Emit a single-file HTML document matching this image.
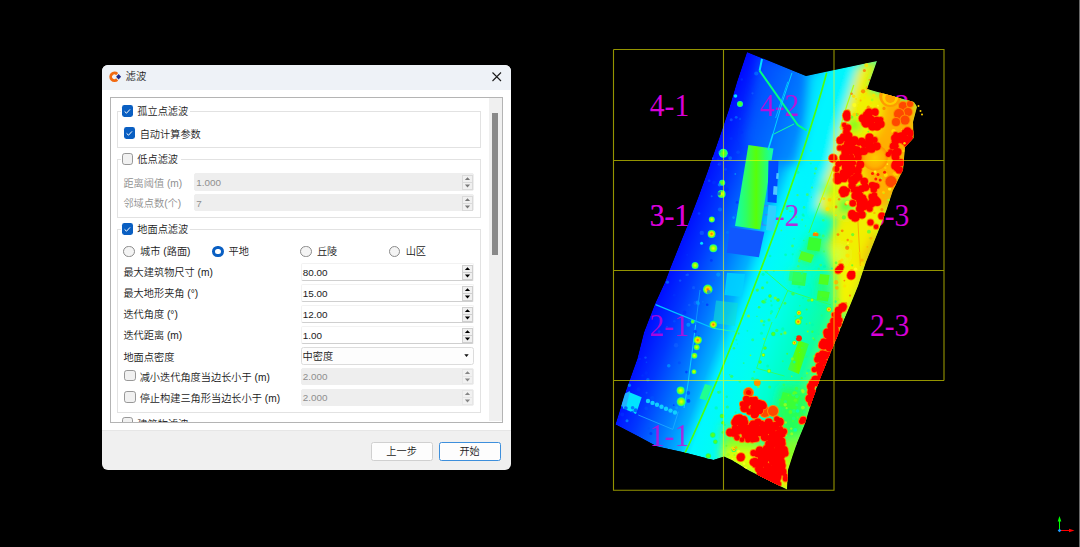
<!DOCTYPE html>
<html lang="zh-CN">
<head>
<meta charset="utf-8">
<title>滤波</title>
<style>
html,body{margin:0;padding:0;background:#000;}
body{width:1080px;height:547px;position:relative;overflow:hidden;
  font-family:"Liberation Sans","Noto Sans CJK SC",sans-serif;font-size:10.2px;color:#1a1a1a;font-weight:350;}
.abs{position:absolute;}
#scene{position:absolute;left:0;top:0;width:1080px;height:547px;}
/* dialog */
#dlg{position:absolute;left:102px;top:65px;width:409px;height:405px;background:#f0f0f0;border-radius:6px;overflow:hidden;}
#title{position:absolute;left:0;top:0;width:409px;height:24.8px;background:#eef2f7;}
#title .t{position:absolute;left:23.5px;top:5px;font-size:10.4px;line-height:14px;color:#1c1c1c;}
#body{position:absolute;left:0;top:24.8px;width:409px;height:340.6px;background:#fff;border-bottom:1px solid #e6e6e6;}
#scroll{position:absolute;left:8px;top:32px;width:392.5px;height:326px;border:1px solid #b4b4b4;box-sizing:border-box;background:#fff;overflow:hidden;}
#track{position:absolute;left:378px;top:0;width:13px;height:323px;background:#f0f0f0;}
#thumb{position:absolute;left:382px;top:15px;width:6px;height:142px;background:#8a8a8a;}
.gb{position:absolute;border:1px solid #e2e2e2;box-sizing:border-box;}
.cb{position:absolute;width:11.5px;height:11.5px;box-sizing:border-box;border-radius:2.4px;margin:-0.9px 0 0 -0.2px;}
.cb.on{background:#0a5fc2;}
.cb.off{background:#f1f1f1;border:1px solid #989898;border-radius:2.8px;}
.cb svg{position:absolute;left:0.5px;top:0.5px;width:10.5px;height:10.5px;}
.lb{position:absolute;white-space:nowrap;line-height:14px;height:14px;margin-top:1px;}
.lb.bgw{background:#fff;}
.dis{color:#8f8f8f;}
.sp{position:absolute;height:17.5px;box-sizing:border-box;background:#fff;border:1px solid #f2f2f2;border-bottom:1.5px solid #cfcfcf;border-radius:2px;}
.sp.d{background:#eeeeee;border:1px solid #eeeeee;height:17.3px;}
.sp .v{position:absolute;left:1.2px;top:1.5px;line-height:14px;font-size:9.9px;}
.sp.cmb .v{font-size:10.2px;left:1px;}
.sp .ar{position:absolute;right:0px;top:0.5px;width:11px;height:15px;}
.rd{position:absolute;width:11.8px;height:11.8px;border-radius:50%;box-sizing:border-box;margin:-0.4px 0 0 -0.5px;}
.rd.off{border:1px solid #8a8a8a;background:#f4f4f4;}
.rd.on{border:3.6px solid #0a5fc2;background:#fff;}
.sp.cmb{border:1px solid #dcdcdc;background:#fdfdfd;border-radius:2.5px;}
.btn{position:absolute;top:376.5px;height:19.5px;width:62px;box-sizing:border-box;border:1px solid #d0d0d0;border-radius:2.5px;background:#fdfdfd;text-align:center;line-height:17px;}
.btn.def{border:1px solid #3d8fdc;}
</style>
</head>
<body>
<svg id="scene" viewBox="0 0 1080 547">
<!--CLB-->
<defs>
<clipPath id="cp"><polygon points="747,52 806,76 877,61 867,89 914,102 917,107 913,122 913.5,138 905,147 903,170 893,190 886.5,210 878,232 866,262 858,286 849,308 835,342 821,376 812,401 804.5,425 797,443 792.5,456 788,470 787,489.5 780,486 767,479.5 749,470.5 732,460 724,456.5 713.5,460 707.5,458.4 683.4,452.3 657,446.6 637.5,436 615.4,424.6 626.3,389.5 637.3,358.8 643.9,332.4 654.9,303.9 665,282 670.2,268.3 679,246.3 687.8,224.4 698.8,195.8 707.5,171.7 713.3,155 719.4,137.5 728.6,110.2 737,81.7"/></clipPath>
<linearGradient id="jet" gradientUnits="userSpaceOnUse" x1="653.7" y1="301.4" x2="833.6" y2="368.6">
<stop offset="0.000" stop-color="#0008ff"/>
<stop offset="0.141" stop-color="#0038ff"/>
<stop offset="0.281" stop-color="#0078ff"/>
<stop offset="0.385" stop-color="#00b0ff"/>
<stop offset="0.432" stop-color="#00e4ff"/>
<stop offset="0.458" stop-color="#00f8ff"/>
<stop offset="0.609" stop-color="#00ffee"/>
<stop offset="0.750" stop-color="#00ffc8"/>
<stop offset="0.854" stop-color="#10ffa0"/>
<stop offset="0.938" stop-color="#60ff60"/>
<stop offset="1.000" stop-color="#c0ff20"/>
</linearGradient>
<filter id="b8" x="-40%" y="-40%" width="180%" height="180%"><feGaussianBlur stdDeviation="8"/></filter>
<filter id="b5" x="-40%" y="-40%" width="180%" height="180%"><feGaussianBlur stdDeviation="5"/></filter>
<filter id="b3" x="-40%" y="-40%" width="180%" height="180%"><feGaussianBlur stdDeviation="3"/></filter>
<filter id="b1" x="-40%" y="-40%" width="180%" height="180%"><feGaussianBlur stdDeviation="1"/></filter>
<linearGradient id="bld" x1="0" y1="0" x2="1" y2="0"><stop offset="0" stop-color="#10ffb0"/><stop offset="0.3" stop-color="#30ff60"/><stop offset="0.55" stop-color="#58ff08"/><stop offset="0.8" stop-color="#28ff70"/><stop offset="1" stop-color="#10ffb0"/></linearGradient>
<linearGradient id="bld2" x1="0" y1="0" x2="1" y2="0"><stop offset="0" stop-color="#30ff60"/><stop offset="0.5" stop-color="#60ff00"/><stop offset="1" stop-color="#30ff50"/></linearGradient>
<radialGradient id="tg"><stop offset="0" stop-color="#ff6000"/><stop offset="0.45" stop-color="#ffe000"/><stop offset="0.8" stop-color="#60ff20"/><stop offset="1" stop-color="#00ffa0"/></radialGradient>
<radialGradient id="ty"><stop offset="0" stop-color="#f0ff00"/><stop offset="0.6" stop-color="#80ff10"/><stop offset="1" stop-color="#00ffa0"/></radialGradient>
<radialGradient id="tgr"><stop offset="0" stop-color="#70ff00"/><stop offset="0.7" stop-color="#30ff50"/><stop offset="1" stop-color="#00ffc0"/></radialGradient>
<radialGradient id="dome"><stop offset="0" stop-color="#ffc800"/><stop offset="0.7" stop-color="#ffb000"/><stop offset="1" stop-color="#ff9000"/></radialGradient>
</defs>
<text x="649.8" y="116" font-family="Liberation Serif, serif" font-size="30.5" textLength="39.4" lengthAdjust="spacingAndGlyphs" fill="#d800d8">4-1</text>
<text x="760.0" y="116" font-family="Liberation Serif, serif" font-size="30.5" textLength="39.4" lengthAdjust="spacingAndGlyphs" fill="#d800d8">4-2</text>
<text x="870.0" y="116" font-family="Liberation Serif, serif" font-size="30.5" textLength="39.4" lengthAdjust="spacingAndGlyphs" fill="#d800d8">4-3</text>
<text x="649.8" y="226" font-family="Liberation Serif, serif" font-size="30.5" textLength="39.4" lengthAdjust="spacingAndGlyphs" fill="#d800d8">3-1</text>
<text x="760.0" y="226" font-family="Liberation Serif, serif" font-size="30.5" textLength="39.4" lengthAdjust="spacingAndGlyphs" fill="#d800d8">3-2</text>
<text x="870.0" y="226" font-family="Liberation Serif, serif" font-size="30.5" textLength="39.4" lengthAdjust="spacingAndGlyphs" fill="#d800d8">3-3</text>
<text x="649.8" y="336" font-family="Liberation Serif, serif" font-size="30.5" textLength="39.4" lengthAdjust="spacingAndGlyphs" fill="#d800d8">2-1</text>
<text x="760.0" y="336" font-family="Liberation Serif, serif" font-size="30.5" textLength="39.4" lengthAdjust="spacingAndGlyphs" fill="#d800d8" clip-path="url(#cp)">2-2</text>
<text x="870.0" y="336" font-family="Liberation Serif, serif" font-size="30.5" textLength="39.4" lengthAdjust="spacingAndGlyphs" fill="#d800d8">2-3</text>
<text x="649.8" y="446" font-family="Liberation Serif, serif" font-size="30.5" textLength="39.4" lengthAdjust="spacingAndGlyphs" fill="#d800d8">1-1</text>
<text x="760.0" y="446" font-family="Liberation Serif, serif" font-size="30.5" textLength="39.4" lengthAdjust="spacingAndGlyphs" fill="#d800d8" clip-path="url(#cp)">1-2</text>
<g clip-path="url(#cp)">
<polygon points="747,52 806,76 877,61 867,89 914,102 917,107 913,122 913.5,138 905,147 903,170 893,190 886.5,210 878,232 866,262 858,286 849,308 835,342 821,376 812,401 804.5,425 797,443 792.5,456 788,470 787,489.5 780,486 767,479.5 749,470.5 732,460 724,456.5 713.5,460 707.5,458.4 683.4,452.3 657,446.6 637.5,436 615.4,424.6 626.3,389.5 637.3,358.8 643.9,332.4 654.9,303.9 665,282 670.2,268.3 679,246.3 687.8,224.4 698.8,195.8 707.5,171.7 713.3,155 719.4,137.5 728.6,110.2 737,81.7" fill="url(#jet)"/>
<g filter="url(#b5)">
<polygon points="760.0,55.0 806.0,76.0 826.0,72.0 800.0,165.0 770.0,165.0 745.0,140.0" fill="#0068ff" opacity="0.55"/>
<polygon points="810.0,74.0 860.0,64.0 838.0,134.0 832.0,162.0 822.0,188.0 817.0,210.0 790.0,215.0 806.0,130.0" fill="#00f4ff" opacity="0.85"/>
<polygon points="858.0,66.0 880.0,58.0 870.0,90.0 920.0,102.0 918.0,140.0 906.0,170.0 896.0,195.0 888.0,212.0 880.0,235.0 868.0,264.0 860.0,288.0 851.0,310.0 838.0,312.0 836.0,300.0 835.0,278.0 827.0,247.0 837.0,218.0 817.0,210.0 822.0,188.0 832.0,162.0 838.0,134.0 848.0,100.0" fill="#f0f000"/>
<polygon points="884.0,96.0 918.0,103.0 915.0,140.0 905.0,172.0 897.0,195.0 886.0,212.0 872.0,200.0 863.0,170.0 864.0,146.0 880.0,130.0" fill="#ffae00"/>
<polygon points="880.0,232.0 868.0,264.0 860.0,288.0 851.0,310.0 844.0,308.0 854.0,284.0 863.0,258.0 872.0,236.0" fill="#ffa800"/>
<polygon points="838.0,268.0 866.0,262.0 851.0,310.0 838.0,312.0" fill="#f4f400"/>
<circle cx="854.0" cy="125.0" r="7.0" fill="#40ff20"/>
<circle cx="846.0" cy="206.0" r="9.0" fill="#40ff40"/>
<circle cx="828.0" cy="189.0" r="7.0" fill="#90ff20"/>
<circle cx="846.0" cy="203.0" r="6.0" fill="#30ff40"/>
<circle cx="815.0" cy="245.0" r="8.0" fill="#30ff40"/>
<circle cx="806.0" cy="258.0" r="7.0" fill="#30ff60"/>
<circle cx="797.0" cy="277.0" r="7.0" fill="#30ff70"/>
<circle cx="823.0" cy="282.0" r="5.0" fill="#40ff40"/>
<circle cx="824.0" cy="294.0" r="5.0" fill="#40ff40"/>
<circle cx="837.0" cy="254.7" r="9.0" fill="#d8ff30"/>
<polygon points="782.0,386.0 812.0,392.0 804.0,430.0 796.0,452.0 780.0,440.0 776.0,410.0" fill="#28ff58"/>
<polygon points="788.0,440.0 800.0,436.0 790.0,468.0 780.0,462.0" fill="#90ff10"/>
<polygon points="722.0,440.0 745.0,436.0 770.0,450.0 790.0,462.0 787.0,492.0 760.0,480.0 722.0,462.0" fill="#e0ff00"/>
<polygon points="722.0,425.0 760.0,430.0 760.0,450.0 722.0,450.0" fill="#70ff30" opacity="0.7"/>
</g>
<clipPath id="c32"><rect x="773" y="190" width="40" height="50"/></clipPath>
<text x="760.0" y="116" font-family="Liberation Serif, serif" font-size="30.5" textLength="39.4" lengthAdjust="spacingAndGlyphs" fill="#d800d8" opacity="0.85">4-2</text>
<text x="760.0" y="226" font-family="Liberation Serif, serif" font-size="30.5" textLength="39.4" lengthAdjust="spacingAndGlyphs" fill="#d800d8" opacity="0.25">3-2</text>
<text x="760.0" y="226" font-family="Liberation Serif, serif" font-size="30.5" textLength="39.4" lengthAdjust="spacingAndGlyphs" fill="#d800d8" clip-path="url(#c32)" opacity="0.75">3-2</text>
<text x="649.8" y="336" font-family="Liberation Serif, serif" font-size="30.5" textLength="39.4" lengthAdjust="spacingAndGlyphs" fill="#d800d8" opacity="0.75">2-1</text>
<text x="649.8" y="446" font-family="Liberation Serif, serif" font-size="30.5" textLength="39.4" lengthAdjust="spacingAndGlyphs" fill="#d800d8" opacity="0.75">1-1</text>
<g>
<polygon points="748.4,145 773.5,148.5 760.2,229.6 735,226" fill="url(#bld)"/>
</g>
<polygon points="730.0,227.2 764.4,231.7 758.9,257.2 726.7,252.8" fill="#1058ff"/>
<polygon points="768.5,160.0 778.5,161.0 776.5,203.0 767.5,202.0" fill="#0048ff"/>
<polygon points="773.6,186.0 777.6,186.5 777.0,195.0 773.0,194.5" fill="#50c8ff"/>
<polygon points="776.5,173.0 778.8,173.3 778.4,179.0 776.1,178.7" fill="#50c8ff"/>
<polygon points="768.5,205.0 776.5,206.0 774.0,231.0 766.0,230.0" fill="#30d0ff"/>
<polygon points="727.0,272.8 745.0,274.0 742.0,297.0 724.5,295.0" fill="#00d4ff" opacity="0.85"/>
<polygon points="716.0,300.6 738.0,303.0 735.0,326.0 713.0,323.0" fill="#10e0d0" opacity="0.55"/>
<polygon points="628.3,391.7 641.7,397.2 636.0,413.9 622.8,408.3" fill="#00e4ff"/>
<polygon points="624.0,394.0 630.0,391.0 626.0,408.0 621.0,406.0" fill="#20b0ff"/>
<circle cx="648.0" cy="401.0" r="2.2" fill="#10d0ff"/>
<circle cx="652.5" cy="402.9" r="2.2" fill="#10d0ff"/>
<circle cx="657.0" cy="404.8" r="2.2" fill="#10d0ff"/>
<circle cx="661.5" cy="406.8" r="2.2" fill="#10d0ff"/>
<circle cx="666.0" cy="408.7" r="2.2" fill="#10d0ff"/>
<circle cx="670.5" cy="410.6" r="2.2" fill="#10d0ff"/>
<circle cx="675.0" cy="412.5" r="2.2" fill="#10d0ff"/>
<path d="M638.3 415.0 L672.8 429.4 L678.3 411.7" stroke="#20b0ff" stroke-width="0.8" fill="none"/>
<polygon points="705.0,384.0 712.0,386.0 706.5,400.5 699.5,398.5" fill="#20ff90"/>
<path d="M762.0 59.0 L759.6 70.6" stroke="#00e0ff" stroke-width="2" fill="none"/>
<path d="M759.6 70.6 L797.8 125.0 L806.7 130.5" stroke="#00ff80" stroke-width="2" fill="none"/>
<path d="M792.0 72.8 L783.0 100.0 L773.0 134.0" stroke="#00e0ff" stroke-width="0.9" fill="none"/>
<path d="M787.8 81.7 L775.6 118.0" stroke="#00d0ff" stroke-width="0.8" fill="none"/>
<path d="M774.0 134.0 L794.0 124.0" stroke="#10ffa0" stroke-width="1" fill="none"/>
<path d="M773.0 134.0 L768.0 150.0" stroke="#00e0ff" stroke-width="1.6" fill="none"/>
<path d="M826.7 72.8 Q806 150 761 269 T685 453" stroke="#48ff10" stroke-width="1.7" fill="none"/>
<path d="M853.8 85.0 L846.7 106.0 L840.0 128.0" stroke="#b0ff10" stroke-width="1.2" fill="none"/>
<path d="M833.3 168.3 L820.0 202.8" stroke="#c8ff00" stroke-width="1.1" fill="none"/>
<path d="M820.0 202.8 L808.9 232.8" stroke="#40ff40" stroke-width="0.9" fill="none"/>
<path d="M655.6 304.6 L713.3 328.3" stroke="#00c8ff" stroke-width="1.2" fill="none"/>
<path d="M713.3 328.3 L735.6 331.7" stroke="#20f0c0" stroke-width="1.0" fill="none"/>
<path d="M695.6 325.0 L687.8 385.0 L684.0 408.0" stroke="#10d8ff" stroke-width="0.9" fill="none"/>
<path d="M700.0 290.0 L695.6 325.0" stroke="#10a0ff" stroke-width="0.8" fill="none"/>
<path d="M764.4 270.6 L787.8 290.6 L831.0 305.0" stroke="#30ff60" stroke-width="1" fill="none"/>
<path d="M787.8 290.6 L775.6 318.3" stroke="#30ff60" stroke-width="1" fill="none"/>
<path d="M764.4 342.8 L756.7 368.3 L784.4 376.0" stroke="#30ff60" stroke-width="0.9" fill="none"/>
<path d="M764.4 342.8 L772.0 322.0" stroke="#30ff60" stroke-width="0.9" fill="none"/>
<path d="M857.8 219.4 L860.4 266.0" stroke="#ff9000" stroke-width="0.7" fill="none"/>
<polygon points="793.3,271.7 806.7,273.0 805.0,286.0 791.6,284.6" fill="#30ff50"/>
<polygon points="820.0,274.0 829.5,275.0 828.0,285.0 818.5,284.0" fill="#50ff20"/>
<polygon points="818.0,290.6 829.5,292.0 828.0,301.5 816.5,300.0" fill="#40ff30"/>
<polygon points="798.9,340.6 808.9,343.9 798.9,373.9 787.8,369.4" fill="url(#bld2)"/>
<polygon points="782.8,392.0 800.0,396.0 796.0,410.0 779.0,406.0" fill="#40ff30" opacity="0.8"/>
<polygon points="809.0,237.0 821.5,239.0 819.5,251.5 807.0,249.5" fill="#38ff30"/>
<polygon points="801.5,251.0 814.0,255.0 811.0,263.0 798.5,259.0" fill="#50ff28"/>
<polygon points="790.0,271.0 804.0,273.0 802.5,282.5 788.5,280.5" fill="#30ff60" opacity="0.7"/>
<polygon points="820.7,291.0 829.5,292.5 828.5,298.0 819.7,296.5" fill="#48ff28"/>
<circle cx="740.0" cy="103.9" r="3.0" fill="url(#tgr)"/>
<circle cx="723.3" cy="153.2" r="4.5" fill="url(#tgr)"/>
<circle cx="722.2" cy="182.8" r="3.0" fill="url(#tgr)"/>
<circle cx="721.6" cy="193.9" r="4.0" fill="url(#ty)"/>
<circle cx="711.8" cy="219.4" r="3.0" fill="url(#ty)"/>
<circle cx="711.6" cy="233.9" r="4.0" fill="url(#tg)"/>
<circle cx="713.3" cy="248.3" r="4.0" fill="url(#ty)"/>
<circle cx="695.1" cy="265.4" r="3.5" fill="url(#ty)"/>
<circle cx="707.8" cy="289.4" r="4.8" fill="url(#tg)"/>
<circle cx="713.3" cy="324.6" r="3.8" fill="url(#tg)"/>
<circle cx="697.8" cy="340.1" r="4.2" fill="url(#tg)"/>
<circle cx="696.7" cy="347.2" r="3.0" fill="url(#ty)"/>
<circle cx="694.4" cy="355.7" r="3.0" fill="url(#ty)"/>
<circle cx="694.0" cy="371.7" r="2.5" fill="url(#ty)"/>
<circle cx="692.7" cy="321.7" r="2.0" fill="url(#tgr)"/>
<circle cx="680.6" cy="390.6" r="4.0" fill="url(#ty)"/>
<circle cx="681.2" cy="401.7" r="4.5" fill="url(#ty)"/>
<circle cx="798.9" cy="312.8" r="2.7" fill="url(#tg)"/>
<circle cx="798.2" cy="321.7" r="3.6" fill="url(#tg)"/>
<circle cx="828.9" cy="309.4" r="3.0" fill="url(#tg)"/>
<circle cx="794.4" cy="342.8" r="2.5" fill="url(#tg)"/>
<circle cx="756.7" cy="381.7" r="3.2" fill="url(#tg)"/>
<circle cx="763.3" cy="355.0" r="2.0" fill="url(#ty)"/>
<circle cx="773.3" cy="333.9" r="2.5" fill="url(#tgr)"/>
<circle cx="712.8" cy="435.0" r="3.0" fill="url(#tgr)"/>
<circle cx="715.4" cy="441.7" r="2.5" fill="url(#tgr)"/>
<circle cx="708.3" cy="456.0" r="3.0" fill="url(#tgr)"/>
<circle cx="722.0" cy="416.0" r="2.5" fill="url(#tgr)"/>
<circle cx="722.8" cy="422.8" r="2.0" fill="url(#tgr)"/>
<circle cx="815.6" cy="233.9" r="2.5" fill="url(#tg)"/>
<circle cx="749.4" cy="392.8" r="4.0" fill="url(#tg)"/>
<circle cx="757.2" cy="382.8" r="3.5" fill="url(#tg)"/>
<circle cx="771.7" cy="411.7" r="5.0" fill="url(#tg)"/>
<circle cx="778.3" cy="420.6" r="5.0" fill="url(#tg)"/>
<circle cx="733.9" cy="449.4" r="2.5" fill="url(#tg)"/>
<circle cx="765.0" cy="348.0" r="2.0" fill="url(#tgr)"/>
<circle cx="760.0" cy="362.0" r="2.0" fill="url(#tgr)"/>
<circle cx="769.0" cy="371.0" r="2.2" fill="url(#ty)"/>
<circle cx="778.0" cy="300.0" r="2.0" fill="url(#tgr)"/>
<circle cx="770.0" cy="296.0" r="2.0" fill="url(#tgr)"/>
<circle cx="801.0" cy="318.0" r="2.0" fill="url(#tgr)"/>
<circle cx="812.0" cy="300.0" r="2.0" fill="url(#ty)"/>
<circle cx="735.5" cy="96.0" r="1.8" fill="#00e0ff"/>
<circle cx="701.6" cy="243.2" r="1.5" fill="#00e0ff"/>
<circle cx="798.9" cy="338.3" r="3.0" fill="#ff2000"/>
<circle cx="853.7" cy="96.3" r="1.7" fill="#ffe000" opacity="0.85"/>
<circle cx="863.0" cy="119.1" r="1.6" fill="#ffe000" opacity="0.85"/>
<circle cx="843.9" cy="217.4" r="2.1" fill="#60ff30" opacity="0.85"/>
<circle cx="843.7" cy="199.4" r="1.0" fill="#a0ff20" opacity="0.85"/>
<circle cx="852.2" cy="265.3" r="1.1" fill="#60ff30" opacity="0.85"/>
<circle cx="878.0" cy="105.7" r="0.9" fill="#ffff20" opacity="0.85"/>
<circle cx="842.2" cy="230.8" r="1.4" fill="#ff8000" opacity="0.85"/>
<circle cx="857.4" cy="121.1" r="1.1" fill="#ffd000" opacity="0.85"/>
<circle cx="845.9" cy="203.9" r="1.5" fill="#ff8000" opacity="0.85"/>
<circle cx="893.5" cy="131.1" r="2.2" fill="#ffe000" opacity="0.85"/>
<circle cx="872.2" cy="99.9" r="1.3" fill="#a0ff20" opacity="0.85"/>
<circle cx="829.6" cy="199.8" r="1.9" fill="#ffd000" opacity="0.85"/>
<circle cx="852.7" cy="234.6" r="1.6" fill="#60ff30" opacity="0.85"/>
<circle cx="893.7" cy="136.6" r="1.6" fill="#ffff20" opacity="0.85"/>
<circle cx="902.5" cy="130.3" r="1.3" fill="#ffff20" opacity="0.85"/>
<circle cx="856.0" cy="296.9" r="1.3" fill="#60ff30" opacity="0.85"/>
<circle cx="846.3" cy="157.3" r="2.0" fill="#ffe000" opacity="0.85"/>
<circle cx="838.3" cy="160.0" r="1.2" fill="#ffb000" opacity="0.85"/>
<circle cx="849.3" cy="163.5" r="1.3" fill="#a0ff20" opacity="0.85"/>
<circle cx="844.9" cy="181.2" r="1.6" fill="#ff8000" opacity="0.85"/>
<circle cx="874.4" cy="212.9" r="1.2" fill="#ffb000" opacity="0.85"/>
<circle cx="889.7" cy="188.9" r="1.7" fill="#ffff20" opacity="0.85"/>
<circle cx="894.5" cy="174.0" r="2.0" fill="#ffd000" opacity="0.85"/>
<circle cx="888.7" cy="200.1" r="1.4" fill="#a0ff20" opacity="0.85"/>
<circle cx="882.2" cy="95.7" r="1.2" fill="#ff8000" opacity="0.85"/>
<circle cx="881.0" cy="178.4" r="1.0" fill="#a0ff20" opacity="0.85"/>
<circle cx="869.4" cy="79.8" r="0.9" fill="#ff8000" opacity="0.85"/>
<circle cx="894.6" cy="179.6" r="1.8" fill="#60ff30" opacity="0.85"/>
<circle cx="873.8" cy="95.2" r="1.6" fill="#ffe000" opacity="0.85"/>
<circle cx="896.3" cy="133.7" r="1.7" fill="#ffe000" opacity="0.85"/>
<circle cx="890.2" cy="124.3" r="1.3" fill="#ffb000" opacity="0.85"/>
<circle cx="856.9" cy="114.6" r="1.6" fill="#60ff30" opacity="0.85"/>
<circle cx="854.3" cy="114.7" r="1.9" fill="#ffd000" opacity="0.85"/>
<circle cx="844.2" cy="189.5" r="1.3" fill="#ffe000" opacity="0.85"/>
<circle cx="868.3" cy="107.2" r="1.6" fill="#ff8000" opacity="0.85"/>
<circle cx="857.7" cy="114.0" r="1.1" fill="#ffb000" opacity="0.85"/>
<circle cx="855.1" cy="180.6" r="2.2" fill="#60ff30" opacity="0.85"/>
<circle cx="895.5" cy="179.4" r="1.0" fill="#ffd000" opacity="0.85"/>
<circle cx="867.4" cy="246.8" r="0.9" fill="#ffb000" opacity="0.85"/>
<circle cx="836.8" cy="287.8" r="1.9" fill="#ffb000" opacity="0.85"/>
<circle cx="881.9" cy="209.4" r="1.5" fill="#ff8000" opacity="0.85"/>
<circle cx="837.3" cy="197.3" r="0.8" fill="#ffd000" opacity="0.85"/>
<circle cx="903.0" cy="111.6" r="1.2" fill="#ff8000" opacity="0.85"/>
<circle cx="871.1" cy="252.0" r="1.3" fill="#60ff30" opacity="0.85"/>
<circle cx="863.1" cy="91.3" r="2.1" fill="#ff8000" opacity="0.85"/>
<circle cx="835.9" cy="215.3" r="1.0" fill="#ffe000" opacity="0.85"/>
<circle cx="853.9" cy="189.7" r="1.6" fill="#ffd000" opacity="0.85"/>
<circle cx="866.3" cy="65.1" r="2.1" fill="#ffe000" opacity="0.85"/>
<circle cx="865.4" cy="213.6" r="1.5" fill="#60ff30" opacity="0.85"/>
<circle cx="841.5" cy="128.4" r="1.5" fill="#ffd000" opacity="0.85"/>
<circle cx="914.3" cy="123.9" r="1.6" fill="#ffb000" opacity="0.85"/>
<circle cx="833.9" cy="170.3" r="0.9" fill="#ffb000" opacity="0.85"/>
<circle cx="864.0" cy="112.0" r="1.2" fill="#ffe000" opacity="0.85"/>
<circle cx="836.0" cy="282.2" r="2.2" fill="#ffb000" opacity="0.85"/>
<circle cx="908.7" cy="99.3" r="1.7" fill="#ffb000" opacity="0.85"/>
<circle cx="837.8" cy="167.6" r="1.5" fill="#ff8000" opacity="0.85"/>
<circle cx="863.3" cy="148.6" r="0.9" fill="#ff8000" opacity="0.85"/>
<circle cx="823.9" cy="198.7" r="1.4" fill="#ffe000" opacity="0.85"/>
<circle cx="859.7" cy="189.4" r="1.2" fill="#ffe000" opacity="0.85"/>
<circle cx="844.4" cy="280.6" r="0.9" fill="#ff8000" opacity="0.85"/>
<circle cx="902.3" cy="123.7" r="1.0" fill="#60ff30" opacity="0.85"/>
<circle cx="877.9" cy="235.9" r="0.9" fill="#ffe000" opacity="0.85"/>
<circle cx="900.4" cy="104.6" r="2.1" fill="#ff8000" opacity="0.85"/>
<circle cx="855.2" cy="198.5" r="2.1" fill="#ff8000" opacity="0.85"/>
<circle cx="917.0" cy="124.5" r="1.1" fill="#ff8000" opacity="0.85"/>
<circle cx="883.6" cy="192.9" r="1.1" fill="#a0ff20" opacity="0.85"/>
<circle cx="871.0" cy="103.2" r="1.3" fill="#ffe000" opacity="0.85"/>
<circle cx="846.1" cy="171.6" r="1.7" fill="#ffff20" opacity="0.85"/>
<circle cx="864.4" cy="183.7" r="2.0" fill="#a0ff20" opacity="0.85"/>
<circle cx="917.1" cy="136.2" r="1.1" fill="#ffb000" opacity="0.85"/>
<circle cx="855.6" cy="269.4" r="1.8" fill="#ffff20" opacity="0.85"/>
<circle cx="859.3" cy="186.5" r="2.2" fill="#60ff30" opacity="0.85"/>
<circle cx="845.7" cy="132.4" r="1.4" fill="#ffb000" opacity="0.85"/>
<circle cx="857.7" cy="141.5" r="2.2" fill="#ff8000" opacity="0.85"/>
<circle cx="846.0" cy="303.3" r="1.2" fill="#ff8000" opacity="0.85"/>
<circle cx="839.9" cy="143.2" r="0.9" fill="#ff8000" opacity="0.85"/>
<circle cx="871.3" cy="109.0" r="1.5" fill="#ffe000" opacity="0.85"/>
<circle cx="836.1" cy="207.0" r="1.4" fill="#ff8000" opacity="0.85"/>
<circle cx="851.8" cy="117.1" r="1.6" fill="#60ff30" opacity="0.85"/>
<circle cx="892.6" cy="183.5" r="1.2" fill="#60ff30" opacity="0.85"/>
<circle cx="873.3" cy="186.1" r="2.0" fill="#ffd000" opacity="0.85"/>
<circle cx="858.9" cy="172.7" r="0.9" fill="#ffe000" opacity="0.85"/>
<circle cx="871.3" cy="193.9" r="1.7" fill="#ffe000" opacity="0.85"/>
<circle cx="895.1" cy="178.4" r="1.9" fill="#ffd000" opacity="0.85"/>
<circle cx="848.0" cy="243.3" r="1.1" fill="#ffff20" opacity="0.85"/>
<circle cx="885.7" cy="174.9" r="2.0" fill="#ffe000" opacity="0.85"/>
<circle cx="868.9" cy="231.7" r="1.9" fill="#60ff30" opacity="0.85"/>
<circle cx="884.0" cy="108.4" r="1.6" fill="#ff8000" opacity="0.85"/>
<circle cx="846.9" cy="246.8" r="1.2" fill="#60ff30" opacity="0.85"/>
<circle cx="835.1" cy="180.5" r="1.5" fill="#ffff20" opacity="0.85"/>
<circle cx="870.0" cy="238.1" r="1.2" fill="#a0ff20" opacity="0.85"/>
<circle cx="867.7" cy="88.1" r="2.1" fill="#ffb000" opacity="0.85"/>
<circle cx="868.3" cy="131.6" r="0.9" fill="#60ff30" opacity="0.85"/>
<circle cx="848.3" cy="111.3" r="2.1" fill="#ffb000" opacity="0.85"/>
<circle cx="895.3" cy="124.5" r="1.3" fill="#60ff30" opacity="0.85"/>
<circle cx="844.7" cy="286.0" r="1.5" fill="#ffe000" opacity="0.85"/>
<circle cx="837.6" cy="299.3" r="1.8" fill="#a0ff20" opacity="0.85"/>
<circle cx="851.6" cy="93.7" r="1.3" fill="#ff8000" opacity="0.85"/>
<circle cx="853.8" cy="143.9" r="1.4" fill="#ffb000" opacity="0.85"/>
<circle cx="850.4" cy="152.5" r="1.4" fill="#ffd000" opacity="0.85"/>
<circle cx="879.7" cy="149.6" r="1.4" fill="#ff8000" opacity="0.85"/>
<circle cx="905.7" cy="129.3" r="0.9" fill="#ffff20" opacity="0.85"/>
<circle cx="850.0" cy="295.6" r="1.1" fill="#ff8000" opacity="0.85"/>
<circle cx="864.8" cy="138.2" r="1.9" fill="#ffd000" opacity="0.85"/>
<circle cx="875.8" cy="240.8" r="0.9" fill="#ffff20" opacity="0.85"/>
<circle cx="862.3" cy="214.2" r="1.0" fill="#ffd000" opacity="0.85"/>
<circle cx="868.3" cy="145.3" r="1.2" fill="#ffff20" opacity="0.85"/>
<circle cx="861.8" cy="118.6" r="1.5" fill="#ffff20" opacity="0.85"/>
<circle cx="860.6" cy="100.5" r="1.0" fill="#ffb000" opacity="0.85"/>
<circle cx="875.9" cy="173.1" r="1.3" fill="#ffd000" opacity="0.85"/>
<circle cx="866.1" cy="93.5" r="1.1" fill="#ffe000" opacity="0.85"/>
<circle cx="839.1" cy="199.2" r="1.2" fill="#ff8000" opacity="0.85"/>
<circle cx="847.3" cy="202.7" r="2.0" fill="#ffff20" opacity="0.85"/>
<circle cx="907.3" cy="155.2" r="1.8" fill="#ffb000" opacity="0.85"/>
<circle cx="858.9" cy="143.9" r="0.9" fill="#ff8000" opacity="0.85"/>
<circle cx="878.3" cy="149.5" r="1.8" fill="#60ff30" opacity="0.85"/>
<circle cx="843.2" cy="126.8" r="1.1" fill="#a0ff20" opacity="0.85"/>
<circle cx="885.3" cy="167.7" r="1.2" fill="#ffd000" opacity="0.85"/>
<circle cx="917.3" cy="121.1" r="1.0" fill="#ffb000" opacity="0.85"/>
<circle cx="836.9" cy="304.9" r="1.0" fill="#ffd000" opacity="0.85"/>
<circle cx="897.0" cy="174.2" r="1.6" fill="#ffe000" opacity="0.85"/>
<circle cx="883.4" cy="192.2" r="1.4" fill="#ffd000" opacity="0.85"/>
<circle cx="873.4" cy="206.1" r="1.3" fill="#ffb000" opacity="0.85"/>
<circle cx="849.3" cy="138.4" r="2.0" fill="#ffb000" opacity="0.85"/>
<circle cx="868.6" cy="117.6" r="1.1" fill="#a0ff20" opacity="0.85"/>
<circle cx="891.1" cy="136.1" r="0.8" fill="#a0ff20" opacity="0.85"/>
<circle cx="863.6" cy="152.0" r="1.5" fill="#ffff20" opacity="0.85"/>
<circle cx="855.1" cy="164.8" r="1.8" fill="#ffb000" opacity="0.85"/>
<circle cx="870.6" cy="108.9" r="1.9" fill="#ffb000" opacity="0.85"/>
<circle cx="896.5" cy="132.9" r="2.1" fill="#a0ff20" opacity="0.85"/>
<circle cx="827.5" cy="209.1" r="2.1" fill="#ffe000" opacity="0.85"/>
<circle cx="842.9" cy="305.4" r="1.0" fill="#ffe000" opacity="0.85"/>
<circle cx="891.6" cy="104.8" r="1.4" fill="#ffff20" opacity="0.85"/>
<circle cx="854.3" cy="105.1" r="2.1" fill="#ffff20" opacity="0.85"/>
<circle cx="867.8" cy="137.2" r="1.8" fill="#ffd000" opacity="0.85"/>
<circle cx="858.6" cy="142.3" r="1.0" fill="#ffe000" opacity="0.85"/>
<circle cx="859.3" cy="253.3" r="1.2" fill="#ffd000" opacity="0.85"/>
<circle cx="864.4" cy="70.5" r="1.5" fill="#ff8000" opacity="0.85"/>
<circle cx="875.1" cy="171.4" r="1.3" fill="#ffff20" opacity="0.85"/>
<circle cx="862.3" cy="264.2" r="1.9" fill="#ffe000" opacity="0.85"/>
<circle cx="858.8" cy="175.9" r="1.9" fill="#ffe000" opacity="0.85"/>
<circle cx="847.2" cy="247.8" r="2.1" fill="#ff8000" opacity="0.85"/>
<circle cx="857.6" cy="143.1" r="2.1" fill="#ffe000" opacity="0.85"/>
<circle cx="847.7" cy="240.0" r="1.2" fill="#ff8000" opacity="0.85"/>
<circle cx="851.1" cy="241.3" r="1.6" fill="#ffd000" opacity="0.85"/>
<circle cx="846.6" cy="167.2" r="1.5" fill="#a0ff20" opacity="0.85"/>
<circle cx="839.9" cy="261.9" r="1.8" fill="#ffd000" opacity="0.85"/>
<circle cx="889.8" cy="96.4" r="1.1" fill="#ffd000" opacity="0.85"/>
<circle cx="853.3" cy="149.9" r="1.9" fill="#ffe000" opacity="0.85"/>
<circle cx="872.2" cy="157.5" r="1.0" fill="#a0ff20" opacity="0.85"/>
<circle cx="876.2" cy="140.7" r="2.2" fill="#ffe000" opacity="0.85"/>
<circle cx="870.9" cy="238.3" r="1.4" fill="#ffb000" opacity="0.85"/>
<circle cx="835.0" cy="175.1" r="2.0" fill="#ffb000" opacity="0.85"/>
<circle cx="904.4" cy="132.6" r="1.6" fill="#ff8000" opacity="0.85"/>
<circle cx="846.9" cy="124.1" r="1.4" fill="#ffb000" opacity="0.85"/>
<circle cx="854.0" cy="158.6" r="2.2" fill="#60ff30" opacity="0.85"/>
<circle cx="873.6" cy="223.0" r="0.9" fill="#a0ff20" opacity="0.85"/>
<circle cx="847.5" cy="255.6" r="2.1" fill="#ffe000" opacity="0.85"/>
<circle cx="862.1" cy="152.4" r="1.7" fill="#ffe000" opacity="0.85"/>
<circle cx="841.9" cy="260.0" r="1.6" fill="#ffe000" opacity="0.85"/>
<circle cx="862.0" cy="260.1" r="1.7" fill="#ffb000" opacity="0.85"/>
<circle cx="838.0" cy="234.6" r="1.4" fill="#ff8000" opacity="0.85"/>
<circle cx="887.4" cy="164.1" r="0.9" fill="#ffff20" opacity="0.85"/>
<circle cx="877.5" cy="148.7" r="1.4" fill="#ffd000" opacity="0.85"/>
<circle cx="885.2" cy="157.2" r="1.4" fill="#ffe000" opacity="0.85"/>
<circle cx="864.5" cy="97.8" r="1.0" fill="#ffe000" opacity="0.85"/>
<circle cx="861.8" cy="282.2" r="1.4" fill="#ffb000" opacity="0.85"/>
<circle cx="836.0" cy="262.8" r="1.4" fill="#60ff30" opacity="0.85"/>
<circle cx="883.0" cy="152.2" r="1.5" fill="#ffb000" opacity="0.85"/>
<circle cx="856.1" cy="99.1" r="1.0" fill="#ffe000" opacity="0.85"/>
<circle cx="731.2" cy="462.0" r="1.8" fill="#a0ff20" opacity="0.85"/>
<circle cx="744.8" cy="468.2" r="1.6" fill="#ffe000" opacity="0.85"/>
<circle cx="783.7" cy="468.9" r="1.8" fill="#a0ff20" opacity="0.85"/>
<circle cx="765.0" cy="468.6" r="1.0" fill="#ffff20" opacity="0.85"/>
<circle cx="736.1" cy="447.6" r="1.3" fill="#ffb000" opacity="0.85"/>
<circle cx="734.3" cy="455.0" r="1.0" fill="#a0ff20" opacity="0.85"/>
<circle cx="763.6" cy="465.2" r="1.6" fill="#60ff30" opacity="0.85"/>
<circle cx="766.8" cy="452.3" r="1.1" fill="#ffff20" opacity="0.85"/>
<circle cx="767.5" cy="459.7" r="1.3" fill="#ffe000" opacity="0.85"/>
<circle cx="754.7" cy="459.7" r="1.5" fill="#ffff20" opacity="0.85"/>
<circle cx="779.2" cy="479.0" r="1.3" fill="#ffe000" opacity="0.85"/>
<circle cx="732.5" cy="458.8" r="0.9" fill="#ffff20" opacity="0.85"/>
<circle cx="757.3" cy="470.8" r="0.8" fill="#a0ff20" opacity="0.85"/>
<circle cx="775.3" cy="463.1" r="0.9" fill="#ffb000" opacity="0.85"/>
<circle cx="783.1" cy="470.6" r="1.7" fill="#ffe000" opacity="0.85"/>
<circle cx="772.3" cy="479.2" r="1.0" fill="#ffff20" opacity="0.85"/>
<circle cx="776.5" cy="472.4" r="1.7" fill="#a0ff20" opacity="0.85"/>
<circle cx="728.3" cy="454.6" r="1.7" fill="#a0ff20" opacity="0.85"/>
<circle cx="745.4" cy="468.5" r="1.9" fill="#ffff20" opacity="0.85"/>
<circle cx="733.5" cy="462.6" r="1.9" fill="#a0ff20" opacity="0.85"/>
<circle cx="763.1" cy="468.6" r="1.1" fill="#60ff30" opacity="0.85"/>
<circle cx="726.4" cy="445.7" r="1.0" fill="#60ff30" opacity="0.85"/>
<circle cx="766.0" cy="455.1" r="1.8" fill="#ffb000" opacity="0.85"/>
<circle cx="758.4" cy="472.5" r="1.9" fill="#60ff30" opacity="0.85"/>
<circle cx="762.1" cy="455.1" r="1.7" fill="#ffff20" opacity="0.85"/>
<circle cx="758.1" cy="452.4" r="2.0" fill="#ffb000" opacity="0.85"/>
<circle cx="785.3" cy="483.5" r="1.7" fill="#ffe000" opacity="0.85"/>
<circle cx="738.6" cy="451.4" r="1.6" fill="#ffff20" opacity="0.85"/>
<circle cx="732.7" cy="448.0" r="1.6" fill="#ffe000" opacity="0.85"/>
<circle cx="744.0" cy="463.7" r="1.4" fill="#ffff20" opacity="0.85"/>
<circle cx="762.5" cy="467.2" r="1.0" fill="#ffb000" opacity="0.85"/>
<circle cx="770.7" cy="459.9" r="0.9" fill="#a0ff20" opacity="0.85"/>
<circle cx="781.5" cy="477.5" r="1.3" fill="#60ff30" opacity="0.85"/>
<circle cx="778.2" cy="483.3" r="1.5" fill="#ffb000" opacity="0.85"/>
<circle cx="759.1" cy="457.5" r="1.1" fill="#ffe000" opacity="0.85"/>
<circle cx="764.4" cy="470.8" r="1.0" fill="#ffff20" opacity="0.85"/>
<circle cx="757.5" cy="470.0" r="1.8" fill="#a0ff20" opacity="0.85"/>
<circle cx="771.8" cy="461.3" r="1.4" fill="#ffff20" opacity="0.85"/>
<circle cx="779.7" cy="475.5" r="1.4" fill="#ffff20" opacity="0.85"/>
<circle cx="785.1" cy="486.0" r="1.1" fill="#ffe000" opacity="0.85"/>
<circle cx="785.6" cy="422.5" r="1.3" fill="#a0ff20" opacity="0.8"/>
<circle cx="808.2" cy="391.6" r="1.4" fill="#20ff80" opacity="0.8"/>
<circle cx="785.4" cy="401.6" r="1.7" fill="#20ff80" opacity="0.8"/>
<circle cx="802.9" cy="407.6" r="1.9" fill="#a0ff20" opacity="0.8"/>
<circle cx="797.6" cy="411.0" r="1.8" fill="#00ffc0" opacity="0.8"/>
<circle cx="793.0" cy="421.0" r="0.8" fill="#60ff20" opacity="0.8"/>
<circle cx="791.7" cy="433.8" r="1.5" fill="#a0ff20" opacity="0.8"/>
<circle cx="804.4" cy="411.8" r="1.5" fill="#20ff80" opacity="0.8"/>
<circle cx="788.4" cy="395.4" r="0.8" fill="#60ff20" opacity="0.8"/>
<circle cx="781.0" cy="428.5" r="0.9" fill="#60ff20" opacity="0.8"/>
<circle cx="802.5" cy="390.3" r="1.5" fill="#a0ff20" opacity="0.8"/>
<circle cx="795.2" cy="429.8" r="1.9" fill="#00ffc0" opacity="0.8"/>
<circle cx="779.9" cy="399.6" r="0.9" fill="#60ff20" opacity="0.8"/>
<circle cx="803.1" cy="391.8" r="1.7" fill="#a0ff20" opacity="0.8"/>
<circle cx="793.2" cy="394.8" r="1.8" fill="#20ff80" opacity="0.8"/>
<circle cx="786.6" cy="408.2" r="1.1" fill="#a0ff20" opacity="0.8"/>
<circle cx="785.2" cy="404.7" r="1.7" fill="#a0ff20" opacity="0.8"/>
<circle cx="797.7" cy="417.4" r="1.1" fill="#60ff20" opacity="0.8"/>
<circle cx="794.7" cy="392.5" r="1.4" fill="#60ff20" opacity="0.8"/>
<circle cx="795.4" cy="400.3" r="1.8" fill="#60ff20" opacity="0.8"/>
<circle cx="796.7" cy="404.9" r="1.3" fill="#20ff80" opacity="0.8"/>
<circle cx="786.4" cy="435.5" r="0.9" fill="#a0ff20" opacity="0.8"/>
<circle cx="793.7" cy="418.4" r="1.8" fill="#20ff80" opacity="0.8"/>
<circle cx="796.8" cy="396.5" r="1.8" fill="#20ff80" opacity="0.8"/>
<circle cx="793.9" cy="393.3" r="1.6" fill="#60ff20" opacity="0.8"/>
<circle cx="796.2" cy="392.9" r="1.2" fill="#60ff20" opacity="0.8"/>
<circle cx="790.4" cy="412.0" r="1.9" fill="#60ff20" opacity="0.8"/>
<circle cx="791.2" cy="428.6" r="1.2" fill="#a0ff20" opacity="0.8"/>
<circle cx="794.0" cy="411.0" r="1.9" fill="#20ff80" opacity="0.8"/>
<circle cx="810.0" cy="394.4" r="1.5" fill="#60ff20" opacity="0.8"/>
<circle cx="747.4" cy="330.8" r="0.9" fill="#00ffb0" opacity="0.85"/>
<circle cx="805.2" cy="376.3" r="0.8" fill="#00ffb0" opacity="0.85"/>
<circle cx="769.0" cy="320.1" r="1.5" fill="#30ff60" opacity="0.85"/>
<circle cx="771.0" cy="301.0" r="1.0" fill="#20ff80" opacity="0.85"/>
<circle cx="835.3" cy="301.6" r="1.4" fill="#20ff80" opacity="0.85"/>
<circle cx="759.1" cy="307.3" r="1.3" fill="#40ff40" opacity="0.85"/>
<circle cx="763.1" cy="274.3" r="1.6" fill="#00ffb0" opacity="0.85"/>
<circle cx="794.3" cy="362.1" r="1.3" fill="#00ffb0" opacity="0.85"/>
<circle cx="733.0" cy="425.5" r="1.4" fill="#30ff60" opacity="0.85"/>
<circle cx="801.9" cy="347.8" r="0.9" fill="#30ff60" opacity="0.85"/>
<circle cx="787.2" cy="353.7" r="1.0" fill="#40ff40" opacity="0.85"/>
<circle cx="821.7" cy="315.6" r="1.1" fill="#20ff80" opacity="0.85"/>
<circle cx="734.0" cy="348.2" r="1.2" fill="#30ff60" opacity="0.85"/>
<circle cx="816.8" cy="365.3" r="1.4" fill="#20ff80" opacity="0.85"/>
<circle cx="821.7" cy="331.0" r="0.7" fill="#00ffb0" opacity="0.85"/>
<circle cx="815.2" cy="354.2" r="0.9" fill="#00ffb0" opacity="0.85"/>
<circle cx="769.7" cy="387.1" r="1.5" fill="#30ff60" opacity="0.85"/>
<circle cx="746.6" cy="405.6" r="1.2" fill="#20ff80" opacity="0.85"/>
<circle cx="737.3" cy="343.9" r="0.7" fill="#00ffb0" opacity="0.85"/>
<circle cx="791.8" cy="376.4" r="0.8" fill="#80ff20" opacity="0.85"/>
<circle cx="771.7" cy="311.4" r="1.5" fill="#00ffb0" opacity="0.85"/>
<circle cx="762.8" cy="301.6" r="1.6" fill="#40ff40" opacity="0.85"/>
<circle cx="810.1" cy="386.2" r="1.2" fill="#30ff60" opacity="0.85"/>
<circle cx="719.9" cy="391.9" r="1.5" fill="#00ffb0" opacity="0.85"/>
<circle cx="763.7" cy="325.0" r="1.2" fill="#20ff80" opacity="0.85"/>
<circle cx="806.1" cy="356.5" r="1.5" fill="#20ff80" opacity="0.85"/>
<circle cx="736.4" cy="339.7" r="1.0" fill="#00ffb0" opacity="0.85"/>
<circle cx="792.3" cy="358.7" r="1.5" fill="#80ff20" opacity="0.85"/>
<circle cx="748.7" cy="389.8" r="1.0" fill="#00ffb0" opacity="0.85"/>
<circle cx="758.3" cy="386.7" r="1.4" fill="#80ff20" opacity="0.85"/>
<circle cx="776.8" cy="330.4" r="1.6" fill="#30ff60" opacity="0.85"/>
<circle cx="813.1" cy="386.0" r="0.7" fill="#40ff40" opacity="0.85"/>
<circle cx="739.8" cy="381.5" r="1.3" fill="#20ff80" opacity="0.85"/>
<circle cx="806.7" cy="309.5" r="1.1" fill="#30ff60" opacity="0.85"/>
<circle cx="722.8" cy="432.4" r="1.3" fill="#40ff40" opacity="0.85"/>
<circle cx="726.8" cy="396.7" r="1.2" fill="#00ffb0" opacity="0.85"/>
<circle cx="791.3" cy="293.1" r="0.8" fill="#00ffb0" opacity="0.85"/>
<circle cx="767.1" cy="282.5" r="1.2" fill="#20ff80" opacity="0.85"/>
<circle cx="795.3" cy="316.4" r="0.9" fill="#30ff60" opacity="0.85"/>
<circle cx="814.3" cy="356.2" r="1.3" fill="#80ff20" opacity="0.85"/>
<circle cx="814.3" cy="339.5" r="1.1" fill="#40ff40" opacity="0.85"/>
<circle cx="803.0" cy="298.0" r="0.9" fill="#00ffb0" opacity="0.85"/>
<circle cx="785.0" cy="332.9" r="1.6" fill="#80ff20" opacity="0.85"/>
<circle cx="746.4" cy="412.1" r="1.3" fill="#20ff80" opacity="0.85"/>
<circle cx="738.6" cy="333.6" r="1.0" fill="#40ff40" opacity="0.85"/>
<circle cx="812.4" cy="324.7" r="1.5" fill="#00ffb0" opacity="0.85"/>
<circle cx="818.7" cy="334.1" r="0.9" fill="#00ffb0" opacity="0.85"/>
<circle cx="807.7" cy="331.6" r="1.0" fill="#80ff20" opacity="0.85"/>
<circle cx="754.2" cy="371.8" r="1.1" fill="#30ff60" opacity="0.85"/>
<circle cx="783.9" cy="384.8" r="1.4" fill="#30ff60" opacity="0.85"/>
<circle cx="785.0" cy="303.3" r="1.4" fill="#40ff40" opacity="0.85"/>
<circle cx="757.3" cy="290.1" r="1.6" fill="#40ff40" opacity="0.85"/>
<circle cx="807.0" cy="373.2" r="1.0" fill="#80ff20" opacity="0.85"/>
<circle cx="767.7" cy="366.0" r="1.5" fill="#00ffb0" opacity="0.85"/>
<circle cx="752.7" cy="378.6" r="1.6" fill="#20ff80" opacity="0.85"/>
<circle cx="764.7" cy="346.2" r="0.8" fill="#00ffb0" opacity="0.85"/>
<circle cx="793.0" cy="293.9" r="1.7" fill="#40ff40" opacity="0.85"/>
<circle cx="764.2" cy="321.6" r="1.3" fill="#00ffb0" opacity="0.85"/>
<circle cx="799.8" cy="305.7" r="0.8" fill="#20ff80" opacity="0.85"/>
<circle cx="799.2" cy="287.2" r="1.3" fill="#00ffb0" opacity="0.85"/>
<circle cx="742.3" cy="403.3" r="0.9" fill="#00ffb0" opacity="0.85"/>
<circle cx="782.8" cy="328.9" r="1.6" fill="#00ffb0" opacity="0.85"/>
<circle cx="763.9" cy="302.0" r="1.7" fill="#40ff40" opacity="0.85"/>
<circle cx="749.4" cy="388.1" r="1.3" fill="#00ffb0" opacity="0.85"/>
<circle cx="761.6" cy="321.0" r="1.5" fill="#80ff20" opacity="0.85"/>
<circle cx="812.5" cy="331.8" r="1.3" fill="#40ff40" opacity="0.85"/>
<circle cx="813.1" cy="380.2" r="1.0" fill="#00ffb0" opacity="0.85"/>
<circle cx="752.7" cy="339.7" r="1.5" fill="#20ff80" opacity="0.85"/>
<circle cx="809.8" cy="323.0" r="0.7" fill="#80ff20" opacity="0.85"/>
<circle cx="806.5" cy="323.9" r="0.8" fill="#30ff60" opacity="0.85"/>
<circle cx="808.4" cy="370.6" r="1.5" fill="#00ffb0" opacity="0.85"/>
<circle cx="727.3" cy="407.0" r="1.6" fill="#20ff80" opacity="0.85"/>
<circle cx="753.8" cy="399.5" r="1.6" fill="#30ff60" opacity="0.85"/>
<circle cx="762.5" cy="287.8" r="1.5" fill="#40ff40" opacity="0.85"/>
<circle cx="731.7" cy="376.3" r="1.6" fill="#30ff60" opacity="0.85"/>
<circle cx="743.7" cy="363.1" r="0.9" fill="#20ff80" opacity="0.85"/>
<circle cx="795.3" cy="337.3" r="1.3" fill="#00ffb0" opacity="0.85"/>
<circle cx="750.5" cy="355.4" r="0.8" fill="#80ff20" opacity="0.85"/>
<circle cx="781.2" cy="334.1" r="1.2" fill="#40ff40" opacity="0.85"/>
<circle cx="818.4" cy="373.8" r="1.3" fill="#20ff80" opacity="0.85"/>
<circle cx="735.6" cy="412.3" r="1.1" fill="#00ffb0" opacity="0.85"/>
<circle cx="831.0" cy="317.7" r="0.7" fill="#20ff80" opacity="0.85"/>
<circle cx="750.3" cy="399.0" r="1.2" fill="#40ff40" opacity="0.85"/>
<circle cx="724.8" cy="424.9" r="1.1" fill="#20ff80" opacity="0.85"/>
<circle cx="796.5" cy="388.4" r="1.7" fill="#40ff40" opacity="0.85"/>
<circle cx="801.8" cy="378.2" r="1.1" fill="#40ff40" opacity="0.85"/>
<circle cx="764.0" cy="338.9" r="1.1" fill="#80ff20" opacity="0.85"/>
<circle cx="765.5" cy="302.3" r="0.9" fill="#20ff80" opacity="0.85"/>
<circle cx="808.6" cy="300.3" r="1.5" fill="#40ff40" opacity="0.85"/>
<circle cx="820.9" cy="297.2" r="1.1" fill="#40ff40" opacity="0.85"/>
<circle cx="825.9" cy="341.3" r="0.7" fill="#40ff40" opacity="0.85"/>
<circle cx="761.5" cy="333.2" r="1.5" fill="#00ffb0" opacity="0.85"/>
<circle cx="745.1" cy="404.5" r="0.9" fill="#00ffb0" opacity="0.85"/>
<circle cx="775.3" cy="298.0" r="1.6" fill="#80ff20" opacity="0.85"/>
<circle cx="756.9" cy="316.4" r="0.7" fill="#30ff60" opacity="0.85"/>
<circle cx="814.2" cy="332.2" r="0.9" fill="#00ffb0" opacity="0.85"/>
<circle cx="765.6" cy="299.6" r="1.2" fill="#20ff80" opacity="0.85"/>
<circle cx="716.2" cy="407.9" r="1.7" fill="#00ffb0" opacity="0.85"/>
<circle cx="771.6" cy="305.4" r="1.1" fill="#00ffb0" opacity="0.85"/>
<circle cx="729.7" cy="374.8" r="0.8" fill="#20ff80" opacity="0.85"/>
<circle cx="770.9" cy="313.5" r="0.9" fill="#30ff60" opacity="0.85"/>
<circle cx="782.8" cy="361.2" r="1.0" fill="#20ff80" opacity="0.85"/>
<circle cx="718.6" cy="392.6" r="1.3" fill="#20ff80" opacity="0.85"/>
<circle cx="779.3" cy="308.4" r="0.8" fill="#30ff60" opacity="0.85"/>
<circle cx="755.5" cy="401.9" r="0.8" fill="#80ff20" opacity="0.85"/>
<circle cx="817.6" cy="360.7" r="0.7" fill="#00ffb0" opacity="0.85"/>
<circle cx="718.1" cy="391.8" r="0.9" fill="#30ff60" opacity="0.85"/>
<circle cx="813.1" cy="338.1" r="0.9" fill="#80ff20" opacity="0.85"/>
<circle cx="748.5" cy="316.1" r="1.5" fill="#80ff20" opacity="0.85"/>
<circle cx="799.4" cy="352.4" r="0.7" fill="#30ff60" opacity="0.85"/>
<circle cx="802.5" cy="271.4" r="0.7" fill="#40ff60" opacity="0.8"/>
<circle cx="815.9" cy="168.7" r="1.4" fill="#40ff60" opacity="0.8"/>
<circle cx="804.1" cy="207.4" r="1.3" fill="#20ff80" opacity="0.8"/>
<circle cx="795.9" cy="216.7" r="1.3" fill="#20ff80" opacity="0.8"/>
<circle cx="803.8" cy="240.5" r="0.8" fill="#20ff80" opacity="0.8"/>
<circle cx="792.7" cy="254.3" r="1.1" fill="#00ffb0" opacity="0.8"/>
<circle cx="823.2" cy="235.9" r="1.4" fill="#40ff60" opacity="0.8"/>
<circle cx="820.7" cy="265.1" r="1.4" fill="#40ff60" opacity="0.8"/>
<circle cx="831.9" cy="268.3" r="0.9" fill="#00ffb0" opacity="0.8"/>
<circle cx="810.8" cy="163.4" r="1.0" fill="#00ffb0" opacity="0.8"/>
<circle cx="818.7" cy="268.7" r="1.2" fill="#20ff80" opacity="0.8"/>
<circle cx="781.4" cy="230.4" r="0.9" fill="#40ff60" opacity="0.8"/>
<circle cx="766.4" cy="271.9" r="1.4" fill="#00ffb0" opacity="0.8"/>
<circle cx="799.3" cy="261.0" r="1.4" fill="#40ff60" opacity="0.8"/>
<circle cx="823.3" cy="220.3" r="1.2" fill="#40ff60" opacity="0.8"/>
<circle cx="790.2" cy="211.2" r="1.0" fill="#40ff60" opacity="0.8"/>
<circle cx="801.9" cy="273.5" r="1.0" fill="#00ffb0" opacity="0.8"/>
<circle cx="773.8" cy="270.9" r="1.0" fill="#00ffb0" opacity="0.8"/>
<circle cx="797.9" cy="172.2" r="1.5" fill="#00ffb0" opacity="0.8"/>
<circle cx="802.2" cy="219.7" r="1.0" fill="#40ff60" opacity="0.8"/>
<circle cx="794.1" cy="238.8" r="0.8" fill="#20ff80" opacity="0.8"/>
<circle cx="810.8" cy="150.8" r="0.9" fill="#40ff60" opacity="0.8"/>
<circle cx="824.0" cy="251.5" r="1.1" fill="#40ff60" opacity="0.8"/>
<circle cx="824.5" cy="266.5" r="1.5" fill="#00ffb0" opacity="0.8"/>
<circle cx="819.3" cy="234.9" r="1.4" fill="#20ff80" opacity="0.8"/>
<circle cx="792.0" cy="211.4" r="0.8" fill="#00ffb0" opacity="0.8"/>
<circle cx="792.5" cy="246.0" r="1.4" fill="#40ff60" opacity="0.8"/>
<circle cx="770.1" cy="256.0" r="1.3" fill="#00ffb0" opacity="0.8"/>
<circle cx="814.8" cy="173.4" r="1.0" fill="#40ff60" opacity="0.8"/>
<circle cx="805.5" cy="225.9" r="0.7" fill="#40ff60" opacity="0.8"/>
<circle cx="804.0" cy="216.1" r="0.8" fill="#00ffb0" opacity="0.8"/>
<circle cx="785.6" cy="254.8" r="1.4" fill="#00ffb0" opacity="0.8"/>
<circle cx="798.3" cy="266.2" r="1.3" fill="#40ff60" opacity="0.8"/>
<circle cx="807.3" cy="194.7" r="1.4" fill="#40ff60" opacity="0.8"/>
<circle cx="812.0" cy="187.6" r="1.0" fill="#40ff60" opacity="0.8"/>
<circle cx="811.4" cy="197.1" r="0.7" fill="#20ff80" opacity="0.8"/>
<circle cx="803.0" cy="215.0" r="1.4" fill="#00ffb0" opacity="0.8"/>
<circle cx="797.5" cy="195.1" r="1.2" fill="#40ff60" opacity="0.8"/>
<circle cx="787.1" cy="208.5" r="1.4" fill="#20ff80" opacity="0.8"/>
<circle cx="800.3" cy="250.8" r="0.9" fill="#20ff80" opacity="0.8"/>
<circle cx="698.1" cy="303.6" r="1.8" fill="#00a0ff" opacity="0.7"/>
<circle cx="718.3" cy="274.6" r="2.1" fill="#00a0ff" opacity="0.7"/>
<circle cx="687.7" cy="274.7" r="1.2" fill="#1060ff" opacity="0.7"/>
<circle cx="627.0" cy="420.7" r="1.5" fill="#00a0ff" opacity="0.7"/>
<circle cx="727.0" cy="189.4" r="1.8" fill="#0030ff" opacity="0.7"/>
<circle cx="752.5" cy="93.3" r="1.1" fill="#1060ff" opacity="0.7"/>
<circle cx="622.3" cy="414.4" r="2.0" fill="#0030ff" opacity="0.7"/>
<circle cx="652.3" cy="398.1" r="2.2" fill="#0050ff" opacity="0.7"/>
<circle cx="719.5" cy="151.9" r="1.2" fill="#00a0ff" opacity="0.7"/>
<circle cx="676.8" cy="407.8" r="1.6" fill="#00a0ff" opacity="0.7"/>
<circle cx="711.7" cy="196.3" r="1.0" fill="#0078ff" opacity="0.7"/>
<circle cx="736.2" cy="117.3" r="1.4" fill="#0078ff" opacity="0.7"/>
<circle cx="720.0" cy="209.5" r="2.1" fill="#0078ff" opacity="0.7"/>
<circle cx="645.4" cy="387.6" r="1.7" fill="#0030ff" opacity="0.7"/>
<circle cx="701.8" cy="232.9" r="2.2" fill="#1060ff" opacity="0.7"/>
<circle cx="646.6" cy="392.8" r="1.0" fill="#1060ff" opacity="0.7"/>
<circle cx="629.2" cy="385.2" r="1.8" fill="#00a0ff" opacity="0.7"/>
<circle cx="727.8" cy="155.7" r="1.1" fill="#0050ff" opacity="0.7"/>
<circle cx="625.8" cy="408.1" r="1.9" fill="#0030ff" opacity="0.7"/>
<circle cx="733.6" cy="217.6" r="1.3" fill="#00a0ff" opacity="0.7"/>
<circle cx="740.0" cy="118.9" r="1.2" fill="#0050ff" opacity="0.7"/>
<circle cx="668.8" cy="365.8" r="1.8" fill="#00a0ff" opacity="0.7"/>
<circle cx="673.7" cy="405.2" r="0.9" fill="#0030ff" opacity="0.7"/>
<circle cx="632.6" cy="407.7" r="1.8" fill="#0050ff" opacity="0.7"/>
<circle cx="674.3" cy="295.2" r="1.4" fill="#0030ff" opacity="0.7"/>
<circle cx="695.5" cy="302.9" r="2.1" fill="#1060ff" opacity="0.7"/>
<circle cx="719.2" cy="164.2" r="1.4" fill="#1060ff" opacity="0.7"/>
<circle cx="646.3" cy="408.4" r="1.8" fill="#0050ff" opacity="0.7"/>
<circle cx="676.1" cy="345.3" r="2.2" fill="#1060ff" opacity="0.7"/>
<circle cx="735.3" cy="174.0" r="0.9" fill="#00a0ff" opacity="0.7"/>
<circle cx="688.4" cy="324.7" r="2.0" fill="#00a0ff" opacity="0.7"/>
<circle cx="689.2" cy="320.3" r="1.1" fill="#1060ff" opacity="0.7"/>
<circle cx="639.6" cy="358.9" r="1.1" fill="#0030ff" opacity="0.7"/>
<circle cx="712.5" cy="158.0" r="1.1" fill="#1060ff" opacity="0.7"/>
<circle cx="680.1" cy="280.6" r="1.2" fill="#1060ff" opacity="0.7"/>
<circle cx="710.0" cy="163.0" r="1.1" fill="#0078ff" opacity="0.7"/>
<circle cx="719.5" cy="184.8" r="1.7" fill="#00a0ff" opacity="0.7"/>
<circle cx="642.6" cy="375.4" r="1.2" fill="#0030ff" opacity="0.7"/>
<circle cx="635.6" cy="410.3" r="2.0" fill="#0030ff" opacity="0.7"/>
<circle cx="697.6" cy="302.4" r="1.9" fill="#00a0ff" opacity="0.7"/>
<circle cx="687.2" cy="254.8" r="1.0" fill="#0030ff" opacity="0.7"/>
<circle cx="702.8" cy="301.8" r="1.0" fill="#0078ff" opacity="0.7"/>
<circle cx="711.3" cy="260.4" r="1.4" fill="#0030ff" opacity="0.7"/>
<circle cx="720.4" cy="210.2" r="0.8" fill="#1060ff" opacity="0.7"/>
<circle cx="713.2" cy="280.0" r="1.5" fill="#1060ff" opacity="0.7"/>
<circle cx="709.2" cy="180.7" r="1.3" fill="#0050ff" opacity="0.7"/>
<circle cx="738.1" cy="152.3" r="1.8" fill="#0050ff" opacity="0.7"/>
<circle cx="648.7" cy="428.4" r="1.1" fill="#0050ff" opacity="0.7"/>
<circle cx="647.9" cy="379.8" r="1.7" fill="#0078ff" opacity="0.7"/>
<circle cx="686.5" cy="275.0" r="1.1" fill="#1060ff" opacity="0.7"/>
<circle cx="731.2" cy="119.7" r="1.5" fill="#1060ff" opacity="0.7"/>
<circle cx="735.6" cy="215.0" r="1.0" fill="#0078ff" opacity="0.7"/>
<circle cx="659.2" cy="331.7" r="1.4" fill="#0050ff" opacity="0.7"/>
<circle cx="741.4" cy="132.2" r="1.8" fill="#0030ff" opacity="0.7"/>
<circle cx="686.4" cy="372.1" r="1.3" fill="#0030ff" opacity="0.7"/>
<circle cx="632.3" cy="412.4" r="1.7" fill="#0030ff" opacity="0.7"/>
<circle cx="667.0" cy="326.8" r="0.8" fill="#1060ff" opacity="0.7"/>
<circle cx="679.3" cy="362.7" r="1.5" fill="#0050ff" opacity="0.7"/>
<circle cx="731.3" cy="138.5" r="1.6" fill="#0030ff" opacity="0.7"/>
<circle cx="725.6" cy="169.4" r="1.4" fill="#0050ff" opacity="0.7"/>
<circle cx="688.3" cy="393.0" r="1.9" fill="#0050ff" opacity="0.7"/>
<circle cx="708.8" cy="292.0" r="2.0" fill="#0078ff" opacity="0.7"/>
<circle cx="715.8" cy="236.0" r="1.1" fill="#1060ff" opacity="0.7"/>
<circle cx="646.4" cy="373.1" r="1.8" fill="#0030ff" opacity="0.7"/>
<circle cx="699.1" cy="213.5" r="1.3" fill="#0050ff" opacity="0.7"/>
<circle cx="667.4" cy="282.2" r="1.6" fill="#0078ff" opacity="0.7"/>
<circle cx="707.2" cy="304.8" r="1.3" fill="#0030ff" opacity="0.7"/>
<circle cx="730.2" cy="158.1" r="1.9" fill="#0078ff" opacity="0.7"/>
<circle cx="714.1" cy="182.5" r="1.9" fill="#0030ff" opacity="0.7"/>
<circle cx="689.3" cy="305.0" r="1.3" fill="#1060ff" opacity="0.7"/>
<circle cx="719.1" cy="193.7" r="1.8" fill="#0030ff" opacity="0.7"/>
<circle cx="688.5" cy="400.9" r="1.9" fill="#0030ff" opacity="0.7"/>
<circle cx="719.7" cy="163.3" r="1.6" fill="#0030ff" opacity="0.7"/>
<circle cx="698.9" cy="336.0" r="0.8" fill="#0030ff" opacity="0.7"/>
<circle cx="674.4" cy="321.2" r="1.3" fill="#0050ff" opacity="0.7"/>
<circle cx="741.8" cy="79.5" r="1.2" fill="#0030ff" opacity="0.7"/>
<circle cx="720.3" cy="191.8" r="0.9" fill="#0078ff" opacity="0.7"/>
<circle cx="737.0" cy="202.4" r="1.3" fill="#0030ff" opacity="0.7"/>
<circle cx="693.6" cy="287.7" r="1.6" fill="#1060ff" opacity="0.7"/>
<circle cx="695.1" cy="331.4" r="1.6" fill="#0030ff" opacity="0.7"/>
<circle cx="684.5" cy="312.5" r="1.9" fill="#0030ff" opacity="0.7"/>
<circle cx="645.5" cy="357.6" r="1.2" fill="#1060ff" opacity="0.7"/>
<circle cx="650.9" cy="433.5" r="1.5" fill="#0030ff" opacity="0.7"/>
<circle cx="646.5" cy="362.2" r="0.8" fill="#0050ff" opacity="0.7"/>
<circle cx="673.9" cy="389.7" r="0.9" fill="#1060ff" opacity="0.7"/>
<circle cx="670.1" cy="405.6" r="1.3" fill="#0078ff" opacity="0.7"/>
<circle cx="718.1" cy="159.5" r="1.3" fill="#0030ff" opacity="0.7"/>
<circle cx="638.6" cy="389.3" r="2.0" fill="#0030ff" opacity="0.7"/>
<circle cx="727.4" cy="232.5" r="1.4" fill="#0078ff" opacity="0.7"/>
<circle cx="756.3" cy="73.5" r="2.1" fill="#0078ff" opacity="0.7"/>
<circle cx="874.8" cy="157.5" r="13.0" fill="url(#dome)"/>
<circle cx="890.2" cy="96.0" r="11.0" fill="#ff9c00"/>
<circle cx="890.2" cy="97.0" r="8.0" fill="#ffd000"/>
<circle cx="890.2" cy="98.0" r="5.0" fill="#ffa000"/>
<circle cx="903.0" cy="106.0" r="5.0" fill="#ff9000"/>
<circle cx="903.0" cy="106.0" r="4.0" fill="#ff4800"/>
<circle cx="908.0" cy="112.0" r="5.0" fill="#ff9000"/>
<circle cx="908.0" cy="112.0" r="4.0" fill="#ff4800"/>
<circle cx="899.0" cy="114.0" r="6.0" fill="#ff9000"/>
<circle cx="899.0" cy="114.0" r="5.0" fill="#ff4800"/>
<circle cx="905.0" cy="120.0" r="5.5" fill="#ff9000"/>
<circle cx="905.0" cy="120.0" r="4.5" fill="#ff4800"/>
<circle cx="896.0" cy="122.0" r="5.0" fill="#ff9000"/>
<circle cx="896.0" cy="122.0" r="4.0" fill="#ff4800"/>
<circle cx="910.0" cy="104.0" r="4.0" fill="#ff9000"/>
<circle cx="910.0" cy="104.0" r="3.0" fill="#ff4800"/>
<circle cx="891.0" cy="181.6" r="6.5" fill="#ff9000"/>
<circle cx="891.0" cy="181.6" r="5.5" fill="#ff4800"/>
<circle cx="765.0" cy="412.0" r="6.0" fill="#ff9000"/>
<circle cx="765.0" cy="412.0" r="5.0" fill="#ff4800"/>
<circle cx="773.0" cy="411.0" r="6.0" fill="#ff9000"/>
<circle cx="773.0" cy="411.0" r="5.0" fill="#ff4800"/>
<circle cx="748.5" cy="392.6" r="5.5" fill="#ff9000"/>
<circle cx="748.5" cy="392.6" r="4.5" fill="#ff4800"/>
<circle cx="748.5" cy="392.6" r="2.5" fill="#ff0000"/>
<circle cx="757.3" cy="382.7" r="3.3" fill="#ff9000"/>
<circle cx="897.8" cy="188.7" r="5.0" fill="#ffa000"/>
<circle cx="872.5" cy="173.4" r="1.5" fill="#ff2000"/>
<circle cx="878.0" cy="174.5" r="1.5" fill="#ff2000"/>
<circle cx="884.6" cy="172.3" r="1.5" fill="#ff2000"/>
<circle cx="875.8" cy="178.9" r="1.5" fill="#ff2000"/>
<circle cx="880.2" cy="180.0" r="1.5" fill="#ff2000"/>
<polygon points="813.0,232.8 818.5,233.3 818.2,236.2 812.7,235.7" fill="#ff8000"/>
<circle cx="846.6" cy="115.2" r="4.6" fill="#ff8000"/>
<circle cx="846.6" cy="115.6" r="3.9" fill="#ff8000"/>
<circle cx="846.9" cy="113.3" r="3.9" fill="#ff8000"/>
<circle cx="846.9" cy="117.6" r="4.3" fill="#ff8000"/>
<circle cx="845.7" cy="132.8" r="3.1" fill="#ff8000"/>
<circle cx="846.5" cy="131.9" r="4.2" fill="#ff8000"/>
<circle cx="844.2" cy="125.0" r="3.2" fill="#ff8000"/>
<circle cx="845.6" cy="128.2" r="3.3" fill="#ff8000"/>
<circle cx="847.8" cy="127.7" r="4.2" fill="#ff8000"/>
<circle cx="876.7" cy="120.1" r="4.2" fill="#ff8000"/>
<circle cx="867.1" cy="115.1" r="5.1" fill="#ff8000"/>
<circle cx="863.0" cy="118.5" r="5.0" fill="#ff8000"/>
<circle cx="880.7" cy="124.1" r="4.8" fill="#ff8000"/>
<circle cx="876.7" cy="119.3" r="3.2" fill="#ff8000"/>
<circle cx="871.6" cy="118.9" r="3.6" fill="#ff8000"/>
<circle cx="876.3" cy="119.2" r="3.2" fill="#ff8000"/>
<circle cx="874.4" cy="111.5" r="3.6" fill="#ff8000"/>
<circle cx="871.1" cy="121.6" r="4.0" fill="#ff8000"/>
<circle cx="870.8" cy="125.1" r="3.9" fill="#ff8000"/>
<circle cx="880.6" cy="119.7" r="3.6" fill="#ff8000"/>
<circle cx="865.5" cy="123.1" r="3.9" fill="#ff8000"/>
<circle cx="877.1" cy="126.4" r="4.9" fill="#ff8000"/>
<circle cx="875.1" cy="112.0" r="4.4" fill="#ff8000"/>
<circle cx="872.5" cy="126.4" r="5.1" fill="#ff8000"/>
<circle cx="869.0" cy="112.8" r="5.1" fill="#ff8000"/>
<circle cx="875.7" cy="113.5" r="3.3" fill="#ff8000"/>
<circle cx="870.7" cy="118.9" r="4.5" fill="#ff8000"/>
<circle cx="865.8" cy="123.8" r="4.5" fill="#ff8000"/>
<circle cx="864.4" cy="122.6" r="4.0" fill="#ff8000"/>
<circle cx="865.9" cy="117.1" r="4.4" fill="#ff8000"/>
<circle cx="866.2" cy="121.0" r="4.2" fill="#ff8000"/>
<circle cx="845.1" cy="150.2" r="4.7" fill="#ff8000"/>
<circle cx="867.5" cy="139.6" r="3.2" fill="#ff8000"/>
<circle cx="869.7" cy="143.2" r="4.4" fill="#ff8000"/>
<circle cx="861.6" cy="141.6" r="4.7" fill="#ff8000"/>
<circle cx="848.6" cy="135.7" r="4.6" fill="#ff8000"/>
<circle cx="857.5" cy="153.1" r="4.8" fill="#ff8000"/>
<circle cx="849.7" cy="150.3" r="4.2" fill="#ff8000"/>
<circle cx="864.4" cy="144.0" r="4.6" fill="#ff8000"/>
<circle cx="852.8" cy="147.4" r="3.4" fill="#ff8000"/>
<circle cx="847.5" cy="150.1" r="3.4" fill="#ff8000"/>
<circle cx="854.3" cy="140.4" r="5.0" fill="#ff8000"/>
<circle cx="869.5" cy="137.6" r="4.9" fill="#ff8000"/>
<circle cx="853.5" cy="149.4" r="4.8" fill="#ff8000"/>
<circle cx="846.9" cy="146.8" r="4.5" fill="#ff8000"/>
<circle cx="850.0" cy="148.3" r="4.4" fill="#ff8000"/>
<circle cx="847.6" cy="143.2" r="4.4" fill="#ff8000"/>
<circle cx="857.2" cy="149.3" r="4.0" fill="#ff8000"/>
<circle cx="871.8" cy="149.1" r="4.6" fill="#ff8000"/>
<circle cx="865.9" cy="150.4" r="3.1" fill="#ff8000"/>
<circle cx="869.0" cy="149.1" r="4.4" fill="#ff8000"/>
<circle cx="848.1" cy="139.0" r="4.7" fill="#ff8000"/>
<circle cx="858.7" cy="151.5" r="3.1" fill="#ff8000"/>
<circle cx="858.0" cy="151.7" r="3.7" fill="#ff8000"/>
<circle cx="839.7" cy="141.3" r="3.6" fill="#ff8000"/>
<circle cx="857.7" cy="150.6" r="4.2" fill="#ff8000"/>
<circle cx="852.7" cy="144.1" r="3.4" fill="#ff8000"/>
<circle cx="869.9" cy="142.6" r="4.7" fill="#ff8000"/>
<circle cx="874.6" cy="139.9" r="3.9" fill="#ff8000"/>
<circle cx="876.6" cy="146.3" r="5.0" fill="#ff8000"/>
<circle cx="844.1" cy="147.3" r="3.6" fill="#ff8000"/>
<circle cx="860.4" cy="153.2" r="3.4" fill="#ff8000"/>
<circle cx="843.7" cy="137.3" r="4.8" fill="#ff8000"/>
<circle cx="854.4" cy="142.8" r="3.5" fill="#ff8000"/>
<circle cx="862.8" cy="141.8" r="4.0" fill="#ff8000"/>
<circle cx="848.4" cy="148.0" r="5.0" fill="#ff8000"/>
<circle cx="847.4" cy="137.0" r="3.3" fill="#ff8000"/>
<circle cx="840.3" cy="140.2" r="4.5" fill="#ff8000"/>
<circle cx="839.7" cy="147.9" r="3.5" fill="#ff8000"/>
<circle cx="871.1" cy="146.5" r="3.4" fill="#ff8000"/>
<circle cx="859.0" cy="143.0" r="3.6" fill="#ff8000"/>
<circle cx="863.8" cy="151.0" r="5.0" fill="#ff8000"/>
<circle cx="855.7" cy="149.5" r="3.9" fill="#ff8000"/>
<circle cx="899.8" cy="136.7" r="4.8" fill="#ff8000"/>
<circle cx="901.6" cy="135.5" r="4.1" fill="#ff8000"/>
<circle cx="905.4" cy="132.6" r="4.0" fill="#ff8000"/>
<circle cx="904.7" cy="132.4" r="3.8" fill="#ff8000"/>
<circle cx="907.5" cy="130.9" r="4.6" fill="#ff8000"/>
<circle cx="904.8" cy="133.2" r="3.9" fill="#ff8000"/>
<circle cx="910.2" cy="138.2" r="3.7" fill="#ff8000"/>
<circle cx="906.3" cy="144.3" r="3.5" fill="#ff8000"/>
<circle cx="895.7" cy="134.4" r="3.3" fill="#ff8000"/>
<circle cx="896.6" cy="140.9" r="3.7" fill="#ff8000"/>
<circle cx="895.3" cy="141.2" r="4.5" fill="#ff8000"/>
<circle cx="901.0" cy="140.2" r="3.9" fill="#ff8000"/>
<circle cx="895.9" cy="138.6" r="3.7" fill="#ff8000"/>
<circle cx="905.8" cy="139.0" r="4.4" fill="#ff8000"/>
<circle cx="910.1" cy="133.0" r="4.5" fill="#ff8000"/>
<circle cx="908.8" cy="142.7" r="3.8" fill="#ff8000"/>
<circle cx="894.6" cy="138.0" r="4.4" fill="#ff8000"/>
<circle cx="902.6" cy="135.2" r="3.2" fill="#ff8000"/>
<circle cx="911.4" cy="133.5" r="3.2" fill="#ff8000"/>
<circle cx="904.0" cy="141.9" r="3.5" fill="#ff8000"/>
<circle cx="896.0" cy="157.7" r="4.3" fill="#ff8000"/>
<circle cx="888.3" cy="154.3" r="3.5" fill="#ff8000"/>
<circle cx="895.0" cy="153.8" r="4.8" fill="#ff8000"/>
<circle cx="896.1" cy="152.8" r="4.9" fill="#ff8000"/>
<circle cx="896.2" cy="146.5" r="3.1" fill="#ff8000"/>
<circle cx="892.8" cy="145.1" r="3.4" fill="#ff8000"/>
<circle cx="895.2" cy="156.8" r="4.6" fill="#ff8000"/>
<circle cx="895.9" cy="146.2" r="3.4" fill="#ff8000"/>
<circle cx="895.2" cy="145.2" r="4.1" fill="#ff8000"/>
<circle cx="890.5" cy="151.7" r="3.3" fill="#ff8000"/>
<circle cx="897.6" cy="152.0" r="4.8" fill="#ff8000"/>
<circle cx="892.6" cy="146.5" r="3.9" fill="#ff8000"/>
<circle cx="900.7" cy="162.3" r="3.4" fill="#ff8000"/>
<circle cx="899.3" cy="169.9" r="4.6" fill="#ff8000"/>
<circle cx="900.7" cy="162.7" r="4.5" fill="#ff8000"/>
<circle cx="897.0" cy="163.2" r="3.6" fill="#ff8000"/>
<circle cx="895.3" cy="165.7" r="5.0" fill="#ff8000"/>
<circle cx="896.3" cy="164.0" r="5.0" fill="#ff8000"/>
<circle cx="896.6" cy="168.6" r="3.7" fill="#ff8000"/>
<circle cx="895.2" cy="162.4" r="3.5" fill="#ff8000"/>
<circle cx="850.8" cy="167.8" r="3.8" fill="#ff8000"/>
<circle cx="844.6" cy="164.6" r="3.8" fill="#ff8000"/>
<circle cx="843.2" cy="157.6" r="4.4" fill="#ff8000"/>
<circle cx="843.0" cy="162.4" r="4.1" fill="#ff8000"/>
<circle cx="860.2" cy="164.4" r="4.9" fill="#ff8000"/>
<circle cx="852.7" cy="159.7" r="3.7" fill="#ff8000"/>
<circle cx="843.3" cy="173.1" r="4.6" fill="#ff8000"/>
<circle cx="850.1" cy="172.2" r="4.6" fill="#ff8000"/>
<circle cx="848.3" cy="149.7" r="4.3" fill="#ff8000"/>
<circle cx="843.5" cy="173.1" r="3.3" fill="#ff8000"/>
<circle cx="853.6" cy="163.1" r="3.4" fill="#ff8000"/>
<circle cx="845.1" cy="168.5" r="3.8" fill="#ff8000"/>
<circle cx="838.4" cy="164.0" r="3.8" fill="#ff8000"/>
<circle cx="857.6" cy="171.1" r="4.7" fill="#ff8000"/>
<circle cx="845.3" cy="153.7" r="4.6" fill="#ff8000"/>
<circle cx="851.6" cy="166.7" r="3.9" fill="#ff8000"/>
<circle cx="849.9" cy="163.6" r="4.3" fill="#ff8000"/>
<circle cx="836.3" cy="169.1" r="3.9" fill="#ff8000"/>
<circle cx="849.2" cy="159.7" r="4.6" fill="#ff8000"/>
<circle cx="846.1" cy="154.6" r="4.4" fill="#ff8000"/>
<circle cx="847.9" cy="163.5" r="4.4" fill="#ff8000"/>
<circle cx="851.3" cy="156.4" r="3.6" fill="#ff8000"/>
<circle cx="852.7" cy="167.2" r="3.4" fill="#ff8000"/>
<circle cx="845.6" cy="173.2" r="3.7" fill="#ff8000"/>
<circle cx="847.3" cy="173.6" r="3.2" fill="#ff8000"/>
<circle cx="846.4" cy="176.6" r="3.7" fill="#ff8000"/>
<circle cx="833.0" cy="158.3" r="4.9" fill="#ff8000"/>
<circle cx="845.4" cy="152.9" r="3.6" fill="#ff8000"/>
<circle cx="851.0" cy="165.6" r="3.2" fill="#ff8000"/>
<circle cx="850.3" cy="151.7" r="3.5" fill="#ff8000"/>
<circle cx="846.8" cy="158.9" r="3.4" fill="#ff8000"/>
<circle cx="855.1" cy="151.2" r="3.9" fill="#ff8000"/>
<circle cx="843.5" cy="159.7" r="4.2" fill="#ff8000"/>
<circle cx="855.9" cy="170.8" r="3.5" fill="#ff8000"/>
<circle cx="847.5" cy="175.3" r="4.1" fill="#ff8000"/>
<circle cx="852.7" cy="151.5" r="3.2" fill="#ff8000"/>
<circle cx="844.6" cy="166.7" r="3.5" fill="#ff8000"/>
<circle cx="847.9" cy="157.2" r="3.7" fill="#ff8000"/>
<circle cx="858.3" cy="169.1" r="4.3" fill="#ff8000"/>
<circle cx="850.5" cy="170.2" r="5.0" fill="#ff8000"/>
<circle cx="847.6" cy="160.6" r="4.7" fill="#ff8000"/>
<circle cx="853.4" cy="171.0" r="3.4" fill="#ff8000"/>
<circle cx="850.9" cy="151.3" r="3.5" fill="#ff8000"/>
<circle cx="858.1" cy="157.7" r="4.5" fill="#ff8000"/>
<circle cx="841.2" cy="178.1" r="4.9" fill="#ff8000"/>
<circle cx="844.5" cy="178.9" r="3.8" fill="#ff8000"/>
<circle cx="844.5" cy="179.6" r="3.2" fill="#ff8000"/>
<circle cx="841.8" cy="177.2" r="3.8" fill="#ff8000"/>
<circle cx="837.6" cy="180.1" r="5.0" fill="#ff8000"/>
<circle cx="837.1" cy="175.8" r="4.1" fill="#ff8000"/>
<circle cx="859.8" cy="177.7" r="3.6" fill="#ff8000"/>
<circle cx="857.5" cy="179.4" r="3.2" fill="#ff8000"/>
<circle cx="852.1" cy="185.7" r="4.5" fill="#ff8000"/>
<circle cx="861.5" cy="188.8" r="4.4" fill="#ff8000"/>
<circle cx="864.3" cy="181.5" r="4.6" fill="#ff8000"/>
<circle cx="853.6" cy="180.0" r="4.4" fill="#ff8000"/>
<circle cx="865.4" cy="187.3" r="4.7" fill="#ff8000"/>
<circle cx="859.0" cy="175.7" r="3.6" fill="#ff8000"/>
<circle cx="853.9" cy="180.5" r="4.9" fill="#ff8000"/>
<circle cx="852.1" cy="180.1" r="4.9" fill="#ff8000"/>
<circle cx="865.2" cy="186.3" r="3.9" fill="#ff8000"/>
<circle cx="854.1" cy="178.3" r="3.8" fill="#ff8000"/>
<circle cx="853.4" cy="190.0" r="3.6" fill="#ff8000"/>
<circle cx="855.6" cy="176.9" r="4.4" fill="#ff8000"/>
<circle cx="863.3" cy="180.7" r="3.7" fill="#ff8000"/>
<circle cx="857.1" cy="190.6" r="5.0" fill="#ff8000"/>
<circle cx="871.5" cy="196.7" r="3.9" fill="#ff8000"/>
<circle cx="863.5" cy="204.3" r="4.2" fill="#ff8000"/>
<circle cx="872.1" cy="203.8" r="4.0" fill="#ff8000"/>
<circle cx="872.4" cy="202.1" r="5.1" fill="#ff8000"/>
<circle cx="869.7" cy="208.8" r="3.9" fill="#ff8000"/>
<circle cx="858.8" cy="199.9" r="3.5" fill="#ff8000"/>
<circle cx="859.4" cy="197.0" r="4.9" fill="#ff8000"/>
<circle cx="859.2" cy="204.3" r="3.4" fill="#ff8000"/>
<circle cx="868.8" cy="205.6" r="4.7" fill="#ff8000"/>
<circle cx="874.4" cy="195.0" r="3.7" fill="#ff8000"/>
<circle cx="859.9" cy="208.7" r="4.7" fill="#ff8000"/>
<circle cx="855.6" cy="195.8" r="5.0" fill="#ff8000"/>
<circle cx="864.0" cy="201.5" r="4.8" fill="#ff8000"/>
<circle cx="870.1" cy="203.7" r="4.2" fill="#ff8000"/>
<circle cx="858.9" cy="194.6" r="4.5" fill="#ff8000"/>
<circle cx="876.1" cy="200.3" r="4.6" fill="#ff8000"/>
<circle cx="862.6" cy="198.1" r="4.6" fill="#ff8000"/>
<circle cx="864.8" cy="206.8" r="4.1" fill="#ff8000"/>
<circle cx="861.7" cy="205.1" r="3.7" fill="#ff8000"/>
<circle cx="861.3" cy="208.1" r="4.5" fill="#ff8000"/>
<circle cx="875.8" cy="197.9" r="3.2" fill="#ff8000"/>
<circle cx="859.8" cy="195.8" r="4.5" fill="#ff8000"/>
<circle cx="877.1" cy="201.9" r="4.9" fill="#ff8000"/>
<circle cx="870.9" cy="204.8" r="3.7" fill="#ff8000"/>
<circle cx="859.9" cy="200.7" r="4.3" fill="#ff8000"/>
<circle cx="852.8" cy="203.2" r="4.1" fill="#ff8000"/>
<circle cx="876.8" cy="186.2" r="3.6" fill="#ff8000"/>
<circle cx="873.8" cy="189.5" r="4.1" fill="#ff8000"/>
<circle cx="874.1" cy="186.0" r="4.3" fill="#ff8000"/>
<circle cx="875.9" cy="185.6" r="3.6" fill="#ff8000"/>
<circle cx="872.1" cy="185.4" r="4.2" fill="#ff8000"/>
<circle cx="844.8" cy="192.5" r="5.0" fill="#ff8000"/>
<circle cx="843.8" cy="190.4" r="5.0" fill="#ff8000"/>
<circle cx="843.0" cy="194.2" r="3.7" fill="#ff8000"/>
<circle cx="847.8" cy="190.2" r="3.2" fill="#ff8000"/>
<circle cx="841.4" cy="191.4" r="3.5" fill="#ff8000"/>
<circle cx="858.6" cy="215.1" r="3.7" fill="#ff8000"/>
<circle cx="852.3" cy="215.6" r="4.9" fill="#ff8000"/>
<circle cx="852.1" cy="213.9" r="4.7" fill="#ff8000"/>
<circle cx="854.3" cy="218.6" r="3.6" fill="#ff8000"/>
<circle cx="861.7" cy="214.3" r="4.3" fill="#ff8000"/>
<circle cx="862.0" cy="214.9" r="4.5" fill="#ff8000"/>
<circle cx="855.4" cy="217.7" r="4.7" fill="#ff8000"/>
<circle cx="855.7" cy="216.2" r="5.0" fill="#ff8000"/>
<circle cx="870.5" cy="222.5" r="3.9" fill="#ff8000"/>
<circle cx="876.1" cy="226.8" r="3.2" fill="#ff8000"/>
<circle cx="881.8" cy="216.1" r="4.4" fill="#ff8000"/>
<circle cx="841.1" cy="267.4" r="3.3" fill="#ff8000"/>
<circle cx="838.0" cy="270.6" r="3.9" fill="#ff8000"/>
<circle cx="841.0" cy="266.4" r="3.3" fill="#ff8000"/>
<circle cx="839.7" cy="269.1" r="4.2" fill="#ff8000"/>
<circle cx="851.7" cy="273.7" r="4.3" fill="#ff8000"/>
<circle cx="851.1" cy="275.6" r="4.9" fill="#ff8000"/>
<circle cx="842.4" cy="308.3" r="4.3" fill="#ff8000"/>
<circle cx="843.2" cy="306.6" r="4.5" fill="#ff8000"/>
<circle cx="843.0" cy="308.5" r="3.5" fill="#ff8000"/>
<circle cx="840.9" cy="306.5" r="3.3" fill="#ff8000"/>
<circle cx="838.5" cy="310.6" r="4.7" fill="#ff8000"/>
<circle cx="837.7" cy="316.8" r="4.1" fill="#ff8000"/>
<circle cx="833.6" cy="324.8" r="4.5" fill="#ff8000"/>
<circle cx="838.7" cy="324.0" r="3.9" fill="#ff8000"/>
<circle cx="838.4" cy="318.6" r="3.5" fill="#ff8000"/>
<circle cx="834.0" cy="314.8" r="3.2" fill="#ff8000"/>
<circle cx="839.8" cy="320.1" r="3.6" fill="#ff8000"/>
<circle cx="833.9" cy="321.1" r="4.6" fill="#ff8000"/>
<circle cx="836.9" cy="315.2" r="4.8" fill="#ff8000"/>
<circle cx="833.9" cy="335.8" r="4.8" fill="#ff8000"/>
<circle cx="832.2" cy="335.8" r="3.7" fill="#ff8000"/>
<circle cx="837.8" cy="334.6" r="5.0" fill="#ff8000"/>
<circle cx="829.6" cy="335.9" r="4.4" fill="#ff8000"/>
<circle cx="834.6" cy="329.5" r="4.9" fill="#ff8000"/>
<circle cx="830.8" cy="326.2" r="4.3" fill="#ff8000"/>
<circle cx="827.3" cy="332.6" r="4.9" fill="#ff8000"/>
<circle cx="830.7" cy="337.5" r="4.2" fill="#ff8000"/>
<circle cx="833.3" cy="331.6" r="3.1" fill="#ff8000"/>
<circle cx="829.9" cy="332.7" r="5.0" fill="#ff8000"/>
<circle cx="832.8" cy="338.3" r="4.6" fill="#ff8000"/>
<circle cx="828.0" cy="334.9" r="5.1" fill="#ff8000"/>
<circle cx="822.4" cy="343.3" r="3.2" fill="#ff8000"/>
<circle cx="822.3" cy="345.5" r="4.1" fill="#ff8000"/>
<circle cx="825.1" cy="355.4" r="5.0" fill="#ff8000"/>
<circle cx="823.7" cy="346.2" r="4.2" fill="#ff8000"/>
<circle cx="828.6" cy="342.7" r="5.0" fill="#ff8000"/>
<circle cx="821.8" cy="343.4" r="3.5" fill="#ff8000"/>
<circle cx="829.9" cy="354.2" r="3.6" fill="#ff8000"/>
<circle cx="822.2" cy="353.2" r="3.6" fill="#ff8000"/>
<circle cx="829.0" cy="348.6" r="3.9" fill="#ff8000"/>
<circle cx="831.3" cy="345.4" r="4.4" fill="#ff8000"/>
<circle cx="828.2" cy="345.6" r="3.8" fill="#ff8000"/>
<circle cx="821.4" cy="345.6" r="3.6" fill="#ff8000"/>
<circle cx="823.7" cy="341.7" r="4.0" fill="#ff8000"/>
<circle cx="833.4" cy="345.4" r="4.3" fill="#ff8000"/>
<circle cx="823.7" cy="368.6" r="3.3" fill="#ff8000"/>
<circle cx="824.6" cy="368.8" r="3.3" fill="#ff8000"/>
<circle cx="822.6" cy="361.3" r="4.7" fill="#ff8000"/>
<circle cx="823.3" cy="354.5" r="4.6" fill="#ff8000"/>
<circle cx="823.6" cy="369.5" r="4.8" fill="#ff8000"/>
<circle cx="820.5" cy="369.6" r="3.1" fill="#ff8000"/>
<circle cx="821.7" cy="355.0" r="3.1" fill="#ff8000"/>
<circle cx="819.6" cy="366.6" r="4.8" fill="#ff8000"/>
<circle cx="818.7" cy="356.0" r="4.2" fill="#ff8000"/>
<circle cx="817.6" cy="359.5" r="4.2" fill="#ff8000"/>
<circle cx="820.6" cy="366.9" r="3.3" fill="#ff8000"/>
<circle cx="821.7" cy="354.5" r="3.9" fill="#ff8000"/>
<circle cx="827.0" cy="363.4" r="4.6" fill="#ff8000"/>
<circle cx="818.9" cy="369.0" r="3.8" fill="#ff8000"/>
<circle cx="819.6" cy="372.3" r="3.3" fill="#ff8000"/>
<circle cx="815.5" cy="379.8" r="4.9" fill="#ff8000"/>
<circle cx="821.6" cy="374.9" r="4.2" fill="#ff8000"/>
<circle cx="817.0" cy="381.0" r="3.8" fill="#ff8000"/>
<circle cx="814.3" cy="369.6" r="3.5" fill="#ff8000"/>
<circle cx="816.2" cy="383.1" r="4.1" fill="#ff8000"/>
<circle cx="817.7" cy="369.3" r="3.4" fill="#ff8000"/>
<circle cx="819.6" cy="372.8" r="3.4" fill="#ff8000"/>
<circle cx="820.3" cy="380.4" r="4.2" fill="#ff8000"/>
<circle cx="821.4" cy="377.2" r="5.0" fill="#ff8000"/>
<circle cx="816.7" cy="393.6" r="3.5" fill="#ff8000"/>
<circle cx="811.0" cy="386.6" r="4.8" fill="#ff8000"/>
<circle cx="812.6" cy="395.1" r="4.0" fill="#ff8000"/>
<circle cx="814.4" cy="382.4" r="3.1" fill="#ff8000"/>
<circle cx="814.6" cy="394.6" r="4.9" fill="#ff8000"/>
<circle cx="816.7" cy="394.3" r="5.0" fill="#ff8000"/>
<circle cx="811.5" cy="392.2" r="4.9" fill="#ff8000"/>
<circle cx="812.7" cy="383.0" r="4.6" fill="#ff8000"/>
<circle cx="809.5" cy="398.6" r="4.8" fill="#ff8000"/>
<circle cx="811.8" cy="402.8" r="4.8" fill="#ff8000"/>
<circle cx="812.7" cy="399.8" r="4.0" fill="#ff8000"/>
<circle cx="758.8" cy="402.2" r="3.3" fill="#ff8000"/>
<circle cx="744.6" cy="407.1" r="4.5" fill="#ff8000"/>
<circle cx="755.5" cy="398.9" r="3.1" fill="#ff8000"/>
<circle cx="742.5" cy="403.9" r="3.5" fill="#ff8000"/>
<circle cx="751.3" cy="399.8" r="3.6" fill="#ff8000"/>
<circle cx="756.5" cy="404.8" r="3.1" fill="#ff8000"/>
<circle cx="744.6" cy="408.2" r="5.0" fill="#ff8000"/>
<circle cx="762.2" cy="405.0" r="3.2" fill="#ff8000"/>
<circle cx="743.4" cy="404.6" r="3.9" fill="#ff8000"/>
<circle cx="759.9" cy="408.6" r="4.1" fill="#ff8000"/>
<circle cx="762.1" cy="404.9" r="4.9" fill="#ff8000"/>
<circle cx="755.7" cy="408.9" r="4.2" fill="#ff8000"/>
<circle cx="746.9" cy="403.6" r="4.1" fill="#ff8000"/>
<circle cx="759.1" cy="405.5" r="4.9" fill="#ff8000"/>
<circle cx="753.9" cy="407.7" r="4.4" fill="#ff8000"/>
<circle cx="759.7" cy="410.5" r="4.3" fill="#ff8000"/>
<circle cx="754.3" cy="400.6" r="4.5" fill="#ff8000"/>
<circle cx="747.0" cy="401.0" r="4.0" fill="#ff8000"/>
<circle cx="747.7" cy="401.1" r="3.5" fill="#ff8000"/>
<circle cx="755.3" cy="412.9" r="4.8" fill="#ff8000"/>
<circle cx="754.6" cy="414.3" r="4.6" fill="#ff8000"/>
<circle cx="746.4" cy="399.1" r="4.3" fill="#ff8000"/>
<circle cx="759.4" cy="410.3" r="4.5" fill="#ff8000"/>
<circle cx="757.0" cy="409.3" r="4.9" fill="#ff8000"/>
<circle cx="755.6" cy="406.7" r="3.6" fill="#ff8000"/>
<circle cx="749.6" cy="411.6" r="4.1" fill="#ff8000"/>
<circle cx="745.8" cy="404.6" r="3.5" fill="#ff8000"/>
<circle cx="754.2" cy="407.9" r="4.5" fill="#ff8000"/>
<circle cx="752.6" cy="402.9" r="3.9" fill="#ff8000"/>
<circle cx="763.5" cy="406.1" r="4.2" fill="#ff8000"/>
<circle cx="754.5" cy="414.6" r="4.6" fill="#ff8000"/>
<circle cx="753.5" cy="407.6" r="3.2" fill="#ff8000"/>
<circle cx="750.7" cy="399.7" r="3.4" fill="#ff8000"/>
<circle cx="761.1" cy="402.7" r="3.2" fill="#ff8000"/>
<circle cx="776.8" cy="418.9" r="3.6" fill="#ff8000"/>
<circle cx="779.8" cy="422.0" r="4.8" fill="#ff8000"/>
<circle cx="779.8" cy="420.3" r="3.4" fill="#ff8000"/>
<circle cx="779.5" cy="422.5" r="4.4" fill="#ff8000"/>
<circle cx="735.0" cy="422.4" r="4.6" fill="#ff8000"/>
<circle cx="739.7" cy="418.2" r="4.7" fill="#ff8000"/>
<circle cx="744.1" cy="422.0" r="3.8" fill="#ff8000"/>
<circle cx="736.3" cy="420.6" r="4.7" fill="#ff8000"/>
<circle cx="745.0" cy="421.7" r="3.6" fill="#ff8000"/>
<circle cx="738.8" cy="423.0" r="3.4" fill="#ff8000"/>
<circle cx="745.1" cy="422.8" r="4.0" fill="#ff8000"/>
<circle cx="738.9" cy="422.9" r="3.3" fill="#ff8000"/>
<circle cx="737.0" cy="422.3" r="3.2" fill="#ff8000"/>
<circle cx="738.2" cy="419.1" r="4.9" fill="#ff8000"/>
<circle cx="743.6" cy="419.8" r="4.7" fill="#ff8000"/>
<circle cx="736.4" cy="418.0" r="3.5" fill="#ff8000"/>
<circle cx="757.8" cy="422.1" r="4.5" fill="#ff8000"/>
<circle cx="748.2" cy="432.9" r="5.0" fill="#ff8000"/>
<circle cx="740.1" cy="426.5" r="3.4" fill="#ff8000"/>
<circle cx="771.1" cy="429.8" r="3.9" fill="#ff8000"/>
<circle cx="742.0" cy="439.7" r="3.3" fill="#ff8000"/>
<circle cx="772.0" cy="425.5" r="4.3" fill="#ff8000"/>
<circle cx="743.6" cy="424.4" r="3.4" fill="#ff8000"/>
<circle cx="763.6" cy="432.6" r="3.9" fill="#ff8000"/>
<circle cx="778.1" cy="435.5" r="4.2" fill="#ff8000"/>
<circle cx="763.8" cy="432.7" r="4.2" fill="#ff8000"/>
<circle cx="753.1" cy="423.6" r="4.1" fill="#ff8000"/>
<circle cx="776.3" cy="424.8" r="4.0" fill="#ff8000"/>
<circle cx="768.4" cy="428.5" r="3.9" fill="#ff8000"/>
<circle cx="753.2" cy="427.6" r="5.1" fill="#ff8000"/>
<circle cx="775.7" cy="425.1" r="4.0" fill="#ff8000"/>
<circle cx="751.4" cy="435.6" r="3.9" fill="#ff8000"/>
<circle cx="759.0" cy="428.3" r="3.5" fill="#ff8000"/>
<circle cx="747.4" cy="436.2" r="4.3" fill="#ff8000"/>
<circle cx="761.3" cy="429.3" r="3.3" fill="#ff8000"/>
<circle cx="761.6" cy="423.5" r="3.7" fill="#ff8000"/>
<circle cx="756.5" cy="433.6" r="4.1" fill="#ff8000"/>
<circle cx="760.5" cy="429.5" r="3.6" fill="#ff8000"/>
<circle cx="775.1" cy="435.6" r="3.2" fill="#ff8000"/>
<circle cx="752.9" cy="436.5" r="5.0" fill="#ff8000"/>
<circle cx="772.4" cy="429.2" r="4.2" fill="#ff8000"/>
<circle cx="764.6" cy="436.9" r="4.6" fill="#ff8000"/>
<circle cx="749.2" cy="434.5" r="4.4" fill="#ff8000"/>
<circle cx="775.6" cy="424.6" r="3.4" fill="#ff8000"/>
<circle cx="758.8" cy="421.9" r="3.2" fill="#ff8000"/>
<circle cx="741.3" cy="423.9" r="4.6" fill="#ff8000"/>
<circle cx="765.3" cy="427.6" r="4.9" fill="#ff8000"/>
<circle cx="756.8" cy="432.4" r="3.3" fill="#ff8000"/>
<circle cx="744.8" cy="435.7" r="3.7" fill="#ff8000"/>
<circle cx="737.7" cy="432.7" r="3.3" fill="#ff8000"/>
<circle cx="738.5" cy="429.1" r="3.9" fill="#ff8000"/>
<circle cx="730.2" cy="432.4" r="4.9" fill="#ff8000"/>
<circle cx="750.8" cy="432.6" r="3.5" fill="#ff8000"/>
<circle cx="755.1" cy="438.1" r="3.6" fill="#ff8000"/>
<circle cx="753.5" cy="433.5" r="4.1" fill="#ff8000"/>
<circle cx="744.1" cy="432.0" r="4.3" fill="#ff8000"/>
<circle cx="784.0" cy="431.5" r="3.9" fill="#ff8000"/>
<circle cx="774.1" cy="433.9" r="3.2" fill="#ff8000"/>
<circle cx="737.2" cy="430.5" r="3.7" fill="#ff8000"/>
<circle cx="772.5" cy="435.6" r="4.0" fill="#ff8000"/>
<circle cx="780.4" cy="428.6" r="3.4" fill="#ff8000"/>
<circle cx="764.8" cy="424.1" r="3.3" fill="#ff8000"/>
<circle cx="752.2" cy="440.2" r="3.2" fill="#ff8000"/>
<circle cx="751.4" cy="424.9" r="3.6" fill="#ff8000"/>
<circle cx="734.9" cy="431.0" r="4.7" fill="#ff8000"/>
<circle cx="775.4" cy="426.9" r="4.5" fill="#ff8000"/>
<circle cx="779.1" cy="433.1" r="4.6" fill="#ff8000"/>
<circle cx="751.6" cy="428.3" r="3.8" fill="#ff8000"/>
<circle cx="737.0" cy="437.6" r="3.7" fill="#ff8000"/>
<circle cx="782.0" cy="433.9" r="4.4" fill="#ff8000"/>
<circle cx="743.3" cy="424.7" r="3.1" fill="#ff8000"/>
<circle cx="734.0" cy="433.7" r="4.0" fill="#ff8000"/>
<circle cx="765.8" cy="427.2" r="5.1" fill="#ff8000"/>
<circle cx="765.2" cy="426.8" r="3.7" fill="#ff8000"/>
<circle cx="759.3" cy="433.9" r="3.2" fill="#ff8000"/>
<circle cx="765.5" cy="436.7" r="4.1" fill="#ff8000"/>
<circle cx="772.7" cy="434.0" r="4.8" fill="#ff8000"/>
<circle cx="755.9" cy="423.3" r="3.5" fill="#ff8000"/>
<circle cx="767.2" cy="429.1" r="4.0" fill="#ff8000"/>
<circle cx="747.9" cy="439.7" r="3.6" fill="#ff8000"/>
<circle cx="781.0" cy="430.1" r="3.2" fill="#ff8000"/>
<circle cx="764.9" cy="437.3" r="4.5" fill="#ff8000"/>
<circle cx="734.7" cy="427.8" r="3.6" fill="#ff8000"/>
<circle cx="762.7" cy="428.1" r="4.7" fill="#ff8000"/>
<circle cx="741.9" cy="427.2" r="4.2" fill="#ff8000"/>
<circle cx="746.2" cy="434.8" r="4.2" fill="#ff8000"/>
<circle cx="754.3" cy="437.9" r="4.9" fill="#ff8000"/>
<circle cx="767.3" cy="431.5" r="3.7" fill="#ff8000"/>
<circle cx="757.2" cy="427.4" r="3.9" fill="#ff8000"/>
<circle cx="779.2" cy="435.9" r="4.7" fill="#ff8000"/>
<circle cx="756.6" cy="439.0" r="3.5" fill="#ff8000"/>
<circle cx="771.1" cy="438.5" r="5.0" fill="#ff8000"/>
<circle cx="755.0" cy="428.5" r="4.0" fill="#ff8000"/>
<circle cx="768.7" cy="422.6" r="4.9" fill="#ff8000"/>
<circle cx="779.0" cy="435.2" r="3.5" fill="#ff8000"/>
<circle cx="761.9" cy="433.6" r="3.9" fill="#ff8000"/>
<circle cx="772.2" cy="459.3" r="4.5" fill="#ff8000"/>
<circle cx="768.6" cy="446.0" r="4.1" fill="#ff8000"/>
<circle cx="766.1" cy="448.1" r="3.8" fill="#ff8000"/>
<circle cx="766.9" cy="448.8" r="4.0" fill="#ff8000"/>
<circle cx="770.4" cy="446.7" r="3.9" fill="#ff8000"/>
<circle cx="781.8" cy="440.9" r="4.4" fill="#ff8000"/>
<circle cx="765.8" cy="456.2" r="3.6" fill="#ff8000"/>
<circle cx="779.0" cy="441.0" r="3.2" fill="#ff8000"/>
<circle cx="772.9" cy="445.0" r="3.8" fill="#ff8000"/>
<circle cx="781.4" cy="446.1" r="3.8" fill="#ff8000"/>
<circle cx="775.7" cy="438.3" r="4.9" fill="#ff8000"/>
<circle cx="768.9" cy="451.5" r="5.0" fill="#ff8000"/>
<circle cx="778.2" cy="449.5" r="5.0" fill="#ff8000"/>
<circle cx="768.3" cy="448.0" r="3.4" fill="#ff8000"/>
<circle cx="774.9" cy="442.7" r="4.5" fill="#ff8000"/>
<circle cx="769.4" cy="455.8" r="3.8" fill="#ff8000"/>
<circle cx="783.8" cy="449.9" r="4.9" fill="#ff8000"/>
<circle cx="781.0" cy="455.6" r="4.9" fill="#ff8000"/>
<circle cx="768.4" cy="443.6" r="4.0" fill="#ff8000"/>
<circle cx="768.9" cy="452.0" r="4.2" fill="#ff8000"/>
<circle cx="769.6" cy="458.6" r="3.7" fill="#ff8000"/>
<circle cx="778.4" cy="440.7" r="4.5" fill="#ff8000"/>
<circle cx="776.3" cy="442.6" r="3.3" fill="#ff8000"/>
<circle cx="770.9" cy="445.3" r="4.2" fill="#ff8000"/>
<circle cx="776.6" cy="455.7" r="4.3" fill="#ff8000"/>
<circle cx="775.8" cy="442.8" r="4.8" fill="#ff8000"/>
<circle cx="772.4" cy="446.1" r="3.2" fill="#ff8000"/>
<circle cx="766.4" cy="452.7" r="4.6" fill="#ff8000"/>
<circle cx="785.0" cy="453.2" r="4.3" fill="#ff8000"/>
<circle cx="768.0" cy="454.7" r="3.2" fill="#ff8000"/>
<circle cx="778.0" cy="439.5" r="3.3" fill="#ff8000"/>
<circle cx="775.0" cy="455.0" r="3.4" fill="#ff8000"/>
<circle cx="782.9" cy="443.8" r="3.6" fill="#ff8000"/>
<circle cx="778.1" cy="450.5" r="3.3" fill="#ff8000"/>
<circle cx="777.4" cy="457.8" r="3.2" fill="#ff8000"/>
<circle cx="771.5" cy="455.3" r="4.6" fill="#ff8000"/>
<circle cx="779.5" cy="445.1" r="5.0" fill="#ff8000"/>
<circle cx="774.5" cy="456.2" r="3.2" fill="#ff8000"/>
<circle cx="785.3" cy="453.8" r="3.4" fill="#ff8000"/>
<circle cx="779.3" cy="444.9" r="4.1" fill="#ff8000"/>
<circle cx="775.3" cy="466.6" r="5.1" fill="#ff8000"/>
<circle cx="771.6" cy="451.0" r="4.8" fill="#ff8000"/>
<circle cx="756.9" cy="462.8" r="3.1" fill="#ff8000"/>
<circle cx="764.1" cy="462.7" r="4.0" fill="#ff8000"/>
<circle cx="772.8" cy="461.7" r="4.7" fill="#ff8000"/>
<circle cx="753.6" cy="462.2" r="4.7" fill="#ff8000"/>
<circle cx="753.6" cy="453.0" r="4.0" fill="#ff8000"/>
<circle cx="764.0" cy="460.5" r="5.0" fill="#ff8000"/>
<circle cx="769.7" cy="469.8" r="4.0" fill="#ff8000"/>
<circle cx="766.1" cy="452.2" r="4.1" fill="#ff8000"/>
<circle cx="763.8" cy="462.3" r="3.6" fill="#ff8000"/>
<circle cx="779.5" cy="461.2" r="3.5" fill="#ff8000"/>
<circle cx="763.4" cy="452.7" r="3.5" fill="#ff8000"/>
<circle cx="773.6" cy="470.0" r="5.1" fill="#ff8000"/>
<circle cx="771.5" cy="457.6" r="3.2" fill="#ff8000"/>
<circle cx="755.2" cy="461.5" r="4.5" fill="#ff8000"/>
<circle cx="759.3" cy="451.6" r="4.7" fill="#ff8000"/>
<circle cx="755.1" cy="464.8" r="3.7" fill="#ff8000"/>
<circle cx="767.6" cy="453.9" r="3.7" fill="#ff8000"/>
<circle cx="761.8" cy="464.8" r="3.5" fill="#ff8000"/>
<circle cx="759.5" cy="456.0" r="3.2" fill="#ff8000"/>
<circle cx="758.8" cy="468.8" r="4.5" fill="#ff8000"/>
<circle cx="776.8" cy="453.4" r="4.1" fill="#ff8000"/>
<circle cx="764.1" cy="462.8" r="4.4" fill="#ff8000"/>
<circle cx="757.0" cy="454.9" r="3.2" fill="#ff8000"/>
<circle cx="770.5" cy="452.6" r="4.0" fill="#ff8000"/>
<circle cx="777.0" cy="451.5" r="3.9" fill="#ff8000"/>
<circle cx="762.1" cy="452.3" r="4.7" fill="#ff8000"/>
<circle cx="764.3" cy="453.9" r="3.2" fill="#ff8000"/>
<circle cx="766.7" cy="456.8" r="4.9" fill="#ff8000"/>
<circle cx="777.8" cy="467.6" r="5.0" fill="#ff8000"/>
<circle cx="761.5" cy="459.0" r="4.5" fill="#ff8000"/>
<circle cx="781.0" cy="462.0" r="4.8" fill="#ff8000"/>
<circle cx="760.1" cy="454.6" r="4.1" fill="#ff8000"/>
<circle cx="775.7" cy="467.3" r="4.5" fill="#ff8000"/>
<circle cx="765.7" cy="458.0" r="4.9" fill="#ff8000"/>
<circle cx="759.4" cy="453.0" r="4.5" fill="#ff8000"/>
<circle cx="759.1" cy="469.1" r="4.3" fill="#ff8000"/>
<circle cx="758.3" cy="463.0" r="3.9" fill="#ff8000"/>
<circle cx="771.6" cy="451.3" r="3.8" fill="#ff8000"/>
<circle cx="776.0" cy="455.3" r="4.2" fill="#ff8000"/>
<circle cx="781.5" cy="465.8" r="5.0" fill="#ff8000"/>
<circle cx="763.8" cy="453.3" r="3.6" fill="#ff8000"/>
<circle cx="772.8" cy="469.1" r="4.6" fill="#ff8000"/>
<circle cx="759.3" cy="463.1" r="4.7" fill="#ff8000"/>
<circle cx="765.9" cy="449.5" r="4.1" fill="#ff8000"/>
<circle cx="775.2" cy="454.2" r="4.7" fill="#ff8000"/>
<circle cx="779.4" cy="461.4" r="4.7" fill="#ff8000"/>
<circle cx="759.7" cy="449.8" r="4.3" fill="#ff8000"/>
<circle cx="759.7" cy="468.7" r="4.8" fill="#ff8000"/>
<circle cx="759.7" cy="451.9" r="3.2" fill="#ff8000"/>
<circle cx="775.1" cy="460.0" r="3.8" fill="#ff8000"/>
<circle cx="774.5" cy="470.1" r="3.2" fill="#ff8000"/>
<circle cx="785.6" cy="478.8" r="3.6" fill="#ff8000"/>
<circle cx="768.0" cy="486.3" r="5.0" fill="#ff8000"/>
<circle cx="769.7" cy="484.9" r="3.9" fill="#ff8000"/>
<circle cx="770.3" cy="487.4" r="3.1" fill="#ff8000"/>
<circle cx="767.9" cy="466.7" r="4.6" fill="#ff8000"/>
<circle cx="761.7" cy="471.3" r="4.7" fill="#ff8000"/>
<circle cx="771.2" cy="473.8" r="4.9" fill="#ff8000"/>
<circle cx="775.4" cy="480.1" r="3.7" fill="#ff8000"/>
<circle cx="765.6" cy="475.8" r="4.0" fill="#ff8000"/>
<circle cx="770.8" cy="481.5" r="4.5" fill="#ff8000"/>
<circle cx="771.5" cy="473.5" r="4.9" fill="#ff8000"/>
<circle cx="776.4" cy="482.0" r="4.6" fill="#ff8000"/>
<circle cx="780.9" cy="466.8" r="4.8" fill="#ff8000"/>
<circle cx="761.0" cy="473.0" r="4.7" fill="#ff8000"/>
<circle cx="780.1" cy="466.1" r="5.0" fill="#ff8000"/>
<circle cx="764.3" cy="477.5" r="4.6" fill="#ff8000"/>
<circle cx="778.8" cy="467.3" r="3.8" fill="#ff8000"/>
<circle cx="777.1" cy="477.6" r="4.9" fill="#ff8000"/>
<circle cx="774.7" cy="474.9" r="3.8" fill="#ff8000"/>
<circle cx="766.1" cy="470.4" r="3.2" fill="#ff8000"/>
<circle cx="779.6" cy="468.6" r="3.7" fill="#ff8000"/>
<circle cx="765.1" cy="477.1" r="4.4" fill="#ff8000"/>
<circle cx="780.5" cy="470.1" r="3.7" fill="#ff8000"/>
<circle cx="766.3" cy="485.1" r="4.6" fill="#ff8000"/>
<circle cx="765.5" cy="485.2" r="4.3" fill="#ff8000"/>
<circle cx="785.3" cy="475.8" r="3.2" fill="#ff8000"/>
<circle cx="771.7" cy="476.4" r="5.0" fill="#ff8000"/>
<circle cx="773.9" cy="481.4" r="4.2" fill="#ff8000"/>
<circle cx="782.5" cy="471.7" r="4.8" fill="#ff8000"/>
<circle cx="767.5" cy="468.5" r="4.0" fill="#ff8000"/>
<circle cx="771.2" cy="475.2" r="3.4" fill="#ff8000"/>
<circle cx="778.6" cy="476.0" r="3.7" fill="#ff8000"/>
<circle cx="761.8" cy="475.0" r="3.3" fill="#ff8000"/>
<circle cx="775.8" cy="467.0" r="3.2" fill="#ff8000"/>
<circle cx="764.6" cy="484.7" r="4.6" fill="#ff8000"/>
<circle cx="778.7" cy="484.0" r="3.3" fill="#ff8000"/>
<circle cx="766.6" cy="479.4" r="5.1" fill="#ff8000"/>
<circle cx="760.2" cy="474.8" r="4.1" fill="#ff8000"/>
<circle cx="773.0" cy="474.8" r="4.8" fill="#ff8000"/>
<circle cx="766.7" cy="471.5" r="4.8" fill="#ff8000"/>
<circle cx="777.3" cy="473.1" r="3.1" fill="#ff8000"/>
<circle cx="765.8" cy="466.9" r="3.3" fill="#ff8000"/>
<circle cx="770.3" cy="474.8" r="3.2" fill="#ff8000"/>
<circle cx="738.4" cy="429.8" r="4.8" fill="#ff8000"/>
<circle cx="744.5" cy="425.1" r="3.5" fill="#ff8000"/>
<circle cx="742.9" cy="430.6" r="3.5" fill="#ff8000"/>
<circle cx="749.0" cy="433.3" r="3.2" fill="#ff8000"/>
<circle cx="750.3" cy="433.8" r="4.3" fill="#ff8000"/>
<circle cx="746.4" cy="432.8" r="4.4" fill="#ff8000"/>
<circle cx="752.6" cy="431.8" r="4.7" fill="#ff8000"/>
<circle cx="748.7" cy="428.6" r="4.7" fill="#ff8000"/>
<circle cx="742.3" cy="429.3" r="4.7" fill="#ff8000"/>
<circle cx="746.4" cy="432.5" r="4.8" fill="#ff8000"/>
<circle cx="752.7" cy="429.2" r="3.3" fill="#ff8000"/>
<circle cx="740.0" cy="431.1" r="3.5" fill="#ff8000"/>
<circle cx="741.3" cy="456.5" r="4.1" fill="#ff8000"/>
<circle cx="740.7" cy="457.3" r="4.8" fill="#ff8000"/>
<circle cx="803.3" cy="420.0" r="4.2" fill="#ff8000"/>
<circle cx="801.6" cy="421.4" r="3.4" fill="#ff8000"/>
<circle cx="846.6" cy="115.2" r="3.7" fill="#ff0000"/>
<circle cx="846.6" cy="115.6" r="3.0" fill="#ff0000"/>
<circle cx="846.9" cy="113.3" r="3.0" fill="#ff0000"/>
<circle cx="846.9" cy="117.6" r="3.4" fill="#ff0000"/>
<circle cx="845.7" cy="132.8" r="2.2" fill="#ff0000"/>
<circle cx="846.5" cy="131.9" r="3.3" fill="#ff0000"/>
<circle cx="844.2" cy="125.0" r="2.3" fill="#ff0000"/>
<circle cx="845.6" cy="128.2" r="2.4" fill="#ff0000"/>
<circle cx="847.8" cy="127.7" r="3.3" fill="#ff0000"/>
<circle cx="876.7" cy="120.1" r="3.3" fill="#ff0000"/>
<circle cx="867.1" cy="115.1" r="4.2" fill="#ff0000"/>
<circle cx="863.0" cy="118.5" r="4.1" fill="#ff0000"/>
<circle cx="880.7" cy="124.1" r="3.9" fill="#ff0000"/>
<circle cx="876.7" cy="119.3" r="2.3" fill="#ff0000"/>
<circle cx="871.6" cy="118.9" r="2.7" fill="#ff0000"/>
<circle cx="876.3" cy="119.2" r="2.3" fill="#ff0000"/>
<circle cx="874.4" cy="111.5" r="2.7" fill="#ff0000"/>
<circle cx="871.1" cy="121.6" r="3.1" fill="#ff0000"/>
<circle cx="870.8" cy="125.1" r="3.0" fill="#ff0000"/>
<circle cx="880.6" cy="119.7" r="2.7" fill="#ff0000"/>
<circle cx="865.5" cy="123.1" r="3.0" fill="#ff0000"/>
<circle cx="877.1" cy="126.4" r="4.0" fill="#ff0000"/>
<circle cx="875.1" cy="112.0" r="3.5" fill="#ff0000"/>
<circle cx="872.5" cy="126.4" r="4.2" fill="#ff0000"/>
<circle cx="869.0" cy="112.8" r="4.2" fill="#ff0000"/>
<circle cx="875.7" cy="113.5" r="2.4" fill="#ff0000"/>
<circle cx="870.7" cy="118.9" r="3.6" fill="#ff0000"/>
<circle cx="865.8" cy="123.8" r="3.6" fill="#ff0000"/>
<circle cx="864.4" cy="122.6" r="3.1" fill="#ff0000"/>
<circle cx="865.9" cy="117.1" r="3.5" fill="#ff0000"/>
<circle cx="866.2" cy="121.0" r="3.3" fill="#ff0000"/>
<circle cx="845.1" cy="150.2" r="3.8" fill="#ff0000"/>
<circle cx="867.5" cy="139.6" r="2.3" fill="#ff0000"/>
<circle cx="869.7" cy="143.2" r="3.5" fill="#ff0000"/>
<circle cx="861.6" cy="141.6" r="3.8" fill="#ff0000"/>
<circle cx="848.6" cy="135.7" r="3.7" fill="#ff0000"/>
<circle cx="857.5" cy="153.1" r="3.9" fill="#ff0000"/>
<circle cx="849.7" cy="150.3" r="3.3" fill="#ff0000"/>
<circle cx="864.4" cy="144.0" r="3.7" fill="#ff0000"/>
<circle cx="852.8" cy="147.4" r="2.5" fill="#ff0000"/>
<circle cx="847.5" cy="150.1" r="2.5" fill="#ff0000"/>
<circle cx="854.3" cy="140.4" r="4.1" fill="#ff0000"/>
<circle cx="869.5" cy="137.6" r="4.0" fill="#ff0000"/>
<circle cx="853.5" cy="149.4" r="3.9" fill="#ff0000"/>
<circle cx="846.9" cy="146.8" r="3.6" fill="#ff0000"/>
<circle cx="850.0" cy="148.3" r="3.5" fill="#ff0000"/>
<circle cx="847.6" cy="143.2" r="3.5" fill="#ff0000"/>
<circle cx="857.2" cy="149.3" r="3.1" fill="#ff0000"/>
<circle cx="871.8" cy="149.1" r="3.7" fill="#ff0000"/>
<circle cx="865.9" cy="150.4" r="2.2" fill="#ff0000"/>
<circle cx="869.0" cy="149.1" r="3.5" fill="#ff0000"/>
<circle cx="848.1" cy="139.0" r="3.8" fill="#ff0000"/>
<circle cx="858.7" cy="151.5" r="2.2" fill="#ff0000"/>
<circle cx="858.0" cy="151.7" r="2.8" fill="#ff0000"/>
<circle cx="839.7" cy="141.3" r="2.7" fill="#ff0000"/>
<circle cx="857.7" cy="150.6" r="3.3" fill="#ff0000"/>
<circle cx="852.7" cy="144.1" r="2.5" fill="#ff0000"/>
<circle cx="869.9" cy="142.6" r="3.8" fill="#ff0000"/>
<circle cx="874.6" cy="139.9" r="3.0" fill="#ff0000"/>
<circle cx="876.6" cy="146.3" r="4.1" fill="#ff0000"/>
<circle cx="844.1" cy="147.3" r="2.7" fill="#ff0000"/>
<circle cx="860.4" cy="153.2" r="2.5" fill="#ff0000"/>
<circle cx="843.7" cy="137.3" r="3.9" fill="#ff0000"/>
<circle cx="854.4" cy="142.8" r="2.6" fill="#ff0000"/>
<circle cx="862.8" cy="141.8" r="3.1" fill="#ff0000"/>
<circle cx="848.4" cy="148.0" r="4.1" fill="#ff0000"/>
<circle cx="847.4" cy="137.0" r="2.4" fill="#ff0000"/>
<circle cx="840.3" cy="140.2" r="3.6" fill="#ff0000"/>
<circle cx="839.7" cy="147.9" r="2.6" fill="#ff0000"/>
<circle cx="871.1" cy="146.5" r="2.5" fill="#ff0000"/>
<circle cx="859.0" cy="143.0" r="2.7" fill="#ff0000"/>
<circle cx="863.8" cy="151.0" r="4.1" fill="#ff0000"/>
<circle cx="855.7" cy="149.5" r="3.0" fill="#ff0000"/>
<circle cx="899.8" cy="136.7" r="3.9" fill="#ff0000"/>
<circle cx="901.6" cy="135.5" r="3.2" fill="#ff0000"/>
<circle cx="905.4" cy="132.6" r="3.1" fill="#ff0000"/>
<circle cx="904.7" cy="132.4" r="2.9" fill="#ff0000"/>
<circle cx="907.5" cy="130.9" r="3.7" fill="#ff0000"/>
<circle cx="904.8" cy="133.2" r="3.0" fill="#ff0000"/>
<circle cx="910.2" cy="138.2" r="2.8" fill="#ff0000"/>
<circle cx="906.3" cy="144.3" r="2.6" fill="#ff0000"/>
<circle cx="895.7" cy="134.4" r="2.4" fill="#ff0000"/>
<circle cx="896.6" cy="140.9" r="2.8" fill="#ff0000"/>
<circle cx="895.3" cy="141.2" r="3.6" fill="#ff0000"/>
<circle cx="901.0" cy="140.2" r="3.0" fill="#ff0000"/>
<circle cx="895.9" cy="138.6" r="2.8" fill="#ff0000"/>
<circle cx="905.8" cy="139.0" r="3.5" fill="#ff0000"/>
<circle cx="910.1" cy="133.0" r="3.6" fill="#ff0000"/>
<circle cx="908.8" cy="142.7" r="2.9" fill="#ff0000"/>
<circle cx="894.6" cy="138.0" r="3.5" fill="#ff0000"/>
<circle cx="902.6" cy="135.2" r="2.3" fill="#ff0000"/>
<circle cx="911.4" cy="133.5" r="2.3" fill="#ff0000"/>
<circle cx="904.0" cy="141.9" r="2.6" fill="#ff0000"/>
<circle cx="896.0" cy="157.7" r="3.4" fill="#ff0000"/>
<circle cx="888.3" cy="154.3" r="2.6" fill="#ff0000"/>
<circle cx="895.0" cy="153.8" r="3.9" fill="#ff0000"/>
<circle cx="896.1" cy="152.8" r="4.0" fill="#ff0000"/>
<circle cx="896.2" cy="146.5" r="2.2" fill="#ff0000"/>
<circle cx="892.8" cy="145.1" r="2.5" fill="#ff0000"/>
<circle cx="895.2" cy="156.8" r="3.7" fill="#ff0000"/>
<circle cx="895.9" cy="146.2" r="2.5" fill="#ff0000"/>
<circle cx="895.2" cy="145.2" r="3.2" fill="#ff0000"/>
<circle cx="890.5" cy="151.7" r="2.4" fill="#ff0000"/>
<circle cx="897.6" cy="152.0" r="3.9" fill="#ff0000"/>
<circle cx="892.6" cy="146.5" r="3.0" fill="#ff0000"/>
<circle cx="900.7" cy="162.3" r="2.5" fill="#ff0000"/>
<circle cx="899.3" cy="169.9" r="3.7" fill="#ff0000"/>
<circle cx="900.7" cy="162.7" r="3.6" fill="#ff0000"/>
<circle cx="897.0" cy="163.2" r="2.7" fill="#ff0000"/>
<circle cx="895.3" cy="165.7" r="4.1" fill="#ff0000"/>
<circle cx="896.3" cy="164.0" r="4.1" fill="#ff0000"/>
<circle cx="896.6" cy="168.6" r="2.8" fill="#ff0000"/>
<circle cx="895.2" cy="162.4" r="2.6" fill="#ff0000"/>
<circle cx="850.8" cy="167.8" r="2.9" fill="#ff0000"/>
<circle cx="844.6" cy="164.6" r="2.9" fill="#ff0000"/>
<circle cx="843.2" cy="157.6" r="3.5" fill="#ff0000"/>
<circle cx="843.0" cy="162.4" r="3.2" fill="#ff0000"/>
<circle cx="860.2" cy="164.4" r="4.0" fill="#ff0000"/>
<circle cx="852.7" cy="159.7" r="2.8" fill="#ff0000"/>
<circle cx="843.3" cy="173.1" r="3.7" fill="#ff0000"/>
<circle cx="850.1" cy="172.2" r="3.7" fill="#ff0000"/>
<circle cx="848.3" cy="149.7" r="3.4" fill="#ff0000"/>
<circle cx="843.5" cy="173.1" r="2.4" fill="#ff0000"/>
<circle cx="853.6" cy="163.1" r="2.5" fill="#ff0000"/>
<circle cx="845.1" cy="168.5" r="2.9" fill="#ff0000"/>
<circle cx="838.4" cy="164.0" r="2.9" fill="#ff0000"/>
<circle cx="857.6" cy="171.1" r="3.8" fill="#ff0000"/>
<circle cx="845.3" cy="153.7" r="3.7" fill="#ff0000"/>
<circle cx="851.6" cy="166.7" r="3.0" fill="#ff0000"/>
<circle cx="849.9" cy="163.6" r="3.4" fill="#ff0000"/>
<circle cx="836.3" cy="169.1" r="3.0" fill="#ff0000"/>
<circle cx="849.2" cy="159.7" r="3.7" fill="#ff0000"/>
<circle cx="846.1" cy="154.6" r="3.5" fill="#ff0000"/>
<circle cx="847.9" cy="163.5" r="3.5" fill="#ff0000"/>
<circle cx="851.3" cy="156.4" r="2.7" fill="#ff0000"/>
<circle cx="852.7" cy="167.2" r="2.5" fill="#ff0000"/>
<circle cx="845.6" cy="173.2" r="2.8" fill="#ff0000"/>
<circle cx="847.3" cy="173.6" r="2.3" fill="#ff0000"/>
<circle cx="846.4" cy="176.6" r="2.8" fill="#ff0000"/>
<circle cx="833.0" cy="158.3" r="4.0" fill="#ff0000"/>
<circle cx="845.4" cy="152.9" r="2.7" fill="#ff0000"/>
<circle cx="851.0" cy="165.6" r="2.3" fill="#ff0000"/>
<circle cx="850.3" cy="151.7" r="2.6" fill="#ff0000"/>
<circle cx="846.8" cy="158.9" r="2.5" fill="#ff0000"/>
<circle cx="855.1" cy="151.2" r="3.0" fill="#ff0000"/>
<circle cx="843.5" cy="159.7" r="3.3" fill="#ff0000"/>
<circle cx="855.9" cy="170.8" r="2.6" fill="#ff0000"/>
<circle cx="847.5" cy="175.3" r="3.2" fill="#ff0000"/>
<circle cx="852.7" cy="151.5" r="2.3" fill="#ff0000"/>
<circle cx="844.6" cy="166.7" r="2.6" fill="#ff0000"/>
<circle cx="847.9" cy="157.2" r="2.8" fill="#ff0000"/>
<circle cx="858.3" cy="169.1" r="3.4" fill="#ff0000"/>
<circle cx="850.5" cy="170.2" r="4.1" fill="#ff0000"/>
<circle cx="847.6" cy="160.6" r="3.8" fill="#ff0000"/>
<circle cx="853.4" cy="171.0" r="2.5" fill="#ff0000"/>
<circle cx="850.9" cy="151.3" r="2.6" fill="#ff0000"/>
<circle cx="858.1" cy="157.7" r="3.6" fill="#ff0000"/>
<circle cx="841.2" cy="178.1" r="4.0" fill="#ff0000"/>
<circle cx="844.5" cy="178.9" r="2.9" fill="#ff0000"/>
<circle cx="844.5" cy="179.6" r="2.3" fill="#ff0000"/>
<circle cx="841.8" cy="177.2" r="2.9" fill="#ff0000"/>
<circle cx="837.6" cy="180.1" r="4.1" fill="#ff0000"/>
<circle cx="837.1" cy="175.8" r="3.2" fill="#ff0000"/>
<circle cx="859.8" cy="177.7" r="2.7" fill="#ff0000"/>
<circle cx="857.5" cy="179.4" r="2.3" fill="#ff0000"/>
<circle cx="852.1" cy="185.7" r="3.6" fill="#ff0000"/>
<circle cx="861.5" cy="188.8" r="3.5" fill="#ff0000"/>
<circle cx="864.3" cy="181.5" r="3.7" fill="#ff0000"/>
<circle cx="853.6" cy="180.0" r="3.5" fill="#ff0000"/>
<circle cx="865.4" cy="187.3" r="3.8" fill="#ff0000"/>
<circle cx="859.0" cy="175.7" r="2.7" fill="#ff0000"/>
<circle cx="853.9" cy="180.5" r="4.0" fill="#ff0000"/>
<circle cx="852.1" cy="180.1" r="4.0" fill="#ff0000"/>
<circle cx="865.2" cy="186.3" r="3.0" fill="#ff0000"/>
<circle cx="854.1" cy="178.3" r="2.9" fill="#ff0000"/>
<circle cx="853.4" cy="190.0" r="2.7" fill="#ff0000"/>
<circle cx="855.6" cy="176.9" r="3.5" fill="#ff0000"/>
<circle cx="863.3" cy="180.7" r="2.8" fill="#ff0000"/>
<circle cx="857.1" cy="190.6" r="4.1" fill="#ff0000"/>
<circle cx="871.5" cy="196.7" r="3.0" fill="#ff0000"/>
<circle cx="863.5" cy="204.3" r="3.3" fill="#ff0000"/>
<circle cx="872.1" cy="203.8" r="3.1" fill="#ff0000"/>
<circle cx="872.4" cy="202.1" r="4.2" fill="#ff0000"/>
<circle cx="869.7" cy="208.8" r="3.0" fill="#ff0000"/>
<circle cx="858.8" cy="199.9" r="2.6" fill="#ff0000"/>
<circle cx="859.4" cy="197.0" r="4.0" fill="#ff0000"/>
<circle cx="859.2" cy="204.3" r="2.5" fill="#ff0000"/>
<circle cx="868.8" cy="205.6" r="3.8" fill="#ff0000"/>
<circle cx="874.4" cy="195.0" r="2.8" fill="#ff0000"/>
<circle cx="859.9" cy="208.7" r="3.8" fill="#ff0000"/>
<circle cx="855.6" cy="195.8" r="4.1" fill="#ff0000"/>
<circle cx="864.0" cy="201.5" r="3.9" fill="#ff0000"/>
<circle cx="870.1" cy="203.7" r="3.3" fill="#ff0000"/>
<circle cx="858.9" cy="194.6" r="3.6" fill="#ff0000"/>
<circle cx="876.1" cy="200.3" r="3.7" fill="#ff0000"/>
<circle cx="862.6" cy="198.1" r="3.7" fill="#ff0000"/>
<circle cx="864.8" cy="206.8" r="3.2" fill="#ff0000"/>
<circle cx="861.7" cy="205.1" r="2.8" fill="#ff0000"/>
<circle cx="861.3" cy="208.1" r="3.6" fill="#ff0000"/>
<circle cx="875.8" cy="197.9" r="2.3" fill="#ff0000"/>
<circle cx="859.8" cy="195.8" r="3.6" fill="#ff0000"/>
<circle cx="877.1" cy="201.9" r="4.0" fill="#ff0000"/>
<circle cx="870.9" cy="204.8" r="2.8" fill="#ff0000"/>
<circle cx="859.9" cy="200.7" r="3.4" fill="#ff0000"/>
<circle cx="852.8" cy="203.2" r="3.2" fill="#ff0000"/>
<circle cx="876.8" cy="186.2" r="2.7" fill="#ff0000"/>
<circle cx="873.8" cy="189.5" r="3.2" fill="#ff0000"/>
<circle cx="874.1" cy="186.0" r="3.4" fill="#ff0000"/>
<circle cx="875.9" cy="185.6" r="2.7" fill="#ff0000"/>
<circle cx="872.1" cy="185.4" r="3.3" fill="#ff0000"/>
<circle cx="844.8" cy="192.5" r="4.1" fill="#ff0000"/>
<circle cx="843.8" cy="190.4" r="4.1" fill="#ff0000"/>
<circle cx="843.0" cy="194.2" r="2.8" fill="#ff0000"/>
<circle cx="847.8" cy="190.2" r="2.3" fill="#ff0000"/>
<circle cx="841.4" cy="191.4" r="2.6" fill="#ff0000"/>
<circle cx="858.6" cy="215.1" r="2.8" fill="#ff0000"/>
<circle cx="852.3" cy="215.6" r="4.0" fill="#ff0000"/>
<circle cx="852.1" cy="213.9" r="3.8" fill="#ff0000"/>
<circle cx="854.3" cy="218.6" r="2.7" fill="#ff0000"/>
<circle cx="861.7" cy="214.3" r="3.4" fill="#ff0000"/>
<circle cx="862.0" cy="214.9" r="3.6" fill="#ff0000"/>
<circle cx="855.4" cy="217.7" r="3.8" fill="#ff0000"/>
<circle cx="855.7" cy="216.2" r="4.1" fill="#ff0000"/>
<circle cx="870.5" cy="222.5" r="3.0" fill="#ff0000"/>
<circle cx="876.1" cy="226.8" r="2.3" fill="#ff0000"/>
<circle cx="881.8" cy="216.1" r="3.5" fill="#ff0000"/>
<circle cx="841.1" cy="267.4" r="2.4" fill="#ff0000"/>
<circle cx="838.0" cy="270.6" r="3.0" fill="#ff0000"/>
<circle cx="841.0" cy="266.4" r="2.4" fill="#ff0000"/>
<circle cx="839.7" cy="269.1" r="3.3" fill="#ff0000"/>
<circle cx="851.7" cy="273.7" r="3.4" fill="#ff0000"/>
<circle cx="851.1" cy="275.6" r="4.0" fill="#ff0000"/>
<circle cx="842.4" cy="308.3" r="3.4" fill="#ff0000"/>
<circle cx="843.2" cy="306.6" r="3.6" fill="#ff0000"/>
<circle cx="843.0" cy="308.5" r="2.6" fill="#ff0000"/>
<circle cx="840.9" cy="306.5" r="2.4" fill="#ff0000"/>
<circle cx="838.5" cy="310.6" r="3.8" fill="#ff0000"/>
<circle cx="837.7" cy="316.8" r="3.2" fill="#ff0000"/>
<circle cx="833.6" cy="324.8" r="3.6" fill="#ff0000"/>
<circle cx="838.7" cy="324.0" r="3.0" fill="#ff0000"/>
<circle cx="838.4" cy="318.6" r="2.6" fill="#ff0000"/>
<circle cx="834.0" cy="314.8" r="2.3" fill="#ff0000"/>
<circle cx="839.8" cy="320.1" r="2.7" fill="#ff0000"/>
<circle cx="833.9" cy="321.1" r="3.7" fill="#ff0000"/>
<circle cx="836.9" cy="315.2" r="3.9" fill="#ff0000"/>
<circle cx="833.9" cy="335.8" r="3.9" fill="#ff0000"/>
<circle cx="832.2" cy="335.8" r="2.8" fill="#ff0000"/>
<circle cx="837.8" cy="334.6" r="4.1" fill="#ff0000"/>
<circle cx="829.6" cy="335.9" r="3.5" fill="#ff0000"/>
<circle cx="834.6" cy="329.5" r="4.0" fill="#ff0000"/>
<circle cx="830.8" cy="326.2" r="3.4" fill="#ff0000"/>
<circle cx="827.3" cy="332.6" r="4.0" fill="#ff0000"/>
<circle cx="830.7" cy="337.5" r="3.3" fill="#ff0000"/>
<circle cx="833.3" cy="331.6" r="2.2" fill="#ff0000"/>
<circle cx="829.9" cy="332.7" r="4.1" fill="#ff0000"/>
<circle cx="832.8" cy="338.3" r="3.7" fill="#ff0000"/>
<circle cx="828.0" cy="334.9" r="4.2" fill="#ff0000"/>
<circle cx="822.4" cy="343.3" r="2.3" fill="#ff0000"/>
<circle cx="822.3" cy="345.5" r="3.2" fill="#ff0000"/>
<circle cx="825.1" cy="355.4" r="4.1" fill="#ff0000"/>
<circle cx="823.7" cy="346.2" r="3.3" fill="#ff0000"/>
<circle cx="828.6" cy="342.7" r="4.1" fill="#ff0000"/>
<circle cx="821.8" cy="343.4" r="2.6" fill="#ff0000"/>
<circle cx="829.9" cy="354.2" r="2.7" fill="#ff0000"/>
<circle cx="822.2" cy="353.2" r="2.7" fill="#ff0000"/>
<circle cx="829.0" cy="348.6" r="3.0" fill="#ff0000"/>
<circle cx="831.3" cy="345.4" r="3.5" fill="#ff0000"/>
<circle cx="828.2" cy="345.6" r="2.9" fill="#ff0000"/>
<circle cx="821.4" cy="345.6" r="2.7" fill="#ff0000"/>
<circle cx="823.7" cy="341.7" r="3.1" fill="#ff0000"/>
<circle cx="833.4" cy="345.4" r="3.4" fill="#ff0000"/>
<circle cx="823.7" cy="368.6" r="2.4" fill="#ff0000"/>
<circle cx="824.6" cy="368.8" r="2.4" fill="#ff0000"/>
<circle cx="822.6" cy="361.3" r="3.8" fill="#ff0000"/>
<circle cx="823.3" cy="354.5" r="3.7" fill="#ff0000"/>
<circle cx="823.6" cy="369.5" r="3.9" fill="#ff0000"/>
<circle cx="820.5" cy="369.6" r="2.2" fill="#ff0000"/>
<circle cx="821.7" cy="355.0" r="2.2" fill="#ff0000"/>
<circle cx="819.6" cy="366.6" r="3.9" fill="#ff0000"/>
<circle cx="818.7" cy="356.0" r="3.3" fill="#ff0000"/>
<circle cx="817.6" cy="359.5" r="3.3" fill="#ff0000"/>
<circle cx="820.6" cy="366.9" r="2.4" fill="#ff0000"/>
<circle cx="821.7" cy="354.5" r="3.0" fill="#ff0000"/>
<circle cx="827.0" cy="363.4" r="3.7" fill="#ff0000"/>
<circle cx="818.9" cy="369.0" r="2.9" fill="#ff0000"/>
<circle cx="819.6" cy="372.3" r="2.4" fill="#ff0000"/>
<circle cx="815.5" cy="379.8" r="4.0" fill="#ff0000"/>
<circle cx="821.6" cy="374.9" r="3.3" fill="#ff0000"/>
<circle cx="817.0" cy="381.0" r="2.9" fill="#ff0000"/>
<circle cx="814.3" cy="369.6" r="2.6" fill="#ff0000"/>
<circle cx="816.2" cy="383.1" r="3.2" fill="#ff0000"/>
<circle cx="817.7" cy="369.3" r="2.5" fill="#ff0000"/>
<circle cx="819.6" cy="372.8" r="2.5" fill="#ff0000"/>
<circle cx="820.3" cy="380.4" r="3.3" fill="#ff0000"/>
<circle cx="821.4" cy="377.2" r="4.1" fill="#ff0000"/>
<circle cx="816.7" cy="393.6" r="2.6" fill="#ff0000"/>
<circle cx="811.0" cy="386.6" r="3.9" fill="#ff0000"/>
<circle cx="812.6" cy="395.1" r="3.1" fill="#ff0000"/>
<circle cx="814.4" cy="382.4" r="2.2" fill="#ff0000"/>
<circle cx="814.6" cy="394.6" r="4.0" fill="#ff0000"/>
<circle cx="816.7" cy="394.3" r="4.1" fill="#ff0000"/>
<circle cx="811.5" cy="392.2" r="4.0" fill="#ff0000"/>
<circle cx="812.7" cy="383.0" r="3.7" fill="#ff0000"/>
<circle cx="809.5" cy="398.6" r="3.9" fill="#ff0000"/>
<circle cx="811.8" cy="402.8" r="3.9" fill="#ff0000"/>
<circle cx="812.7" cy="399.8" r="3.1" fill="#ff0000"/>
<circle cx="758.8" cy="402.2" r="2.4" fill="#ff0000"/>
<circle cx="744.6" cy="407.1" r="3.6" fill="#ff0000"/>
<circle cx="755.5" cy="398.9" r="2.2" fill="#ff0000"/>
<circle cx="742.5" cy="403.9" r="2.6" fill="#ff0000"/>
<circle cx="751.3" cy="399.8" r="2.7" fill="#ff0000"/>
<circle cx="756.5" cy="404.8" r="2.2" fill="#ff0000"/>
<circle cx="744.6" cy="408.2" r="4.1" fill="#ff0000"/>
<circle cx="762.2" cy="405.0" r="2.3" fill="#ff0000"/>
<circle cx="743.4" cy="404.6" r="3.0" fill="#ff0000"/>
<circle cx="759.9" cy="408.6" r="3.2" fill="#ff0000"/>
<circle cx="762.1" cy="404.9" r="4.0" fill="#ff0000"/>
<circle cx="755.7" cy="408.9" r="3.3" fill="#ff0000"/>
<circle cx="746.9" cy="403.6" r="3.2" fill="#ff0000"/>
<circle cx="759.1" cy="405.5" r="4.0" fill="#ff0000"/>
<circle cx="753.9" cy="407.7" r="3.5" fill="#ff0000"/>
<circle cx="759.7" cy="410.5" r="3.4" fill="#ff0000"/>
<circle cx="754.3" cy="400.6" r="3.6" fill="#ff0000"/>
<circle cx="747.0" cy="401.0" r="3.1" fill="#ff0000"/>
<circle cx="747.7" cy="401.1" r="2.6" fill="#ff0000"/>
<circle cx="755.3" cy="412.9" r="3.9" fill="#ff0000"/>
<circle cx="754.6" cy="414.3" r="3.7" fill="#ff0000"/>
<circle cx="746.4" cy="399.1" r="3.4" fill="#ff0000"/>
<circle cx="759.4" cy="410.3" r="3.6" fill="#ff0000"/>
<circle cx="757.0" cy="409.3" r="4.0" fill="#ff0000"/>
<circle cx="755.6" cy="406.7" r="2.7" fill="#ff0000"/>
<circle cx="749.6" cy="411.6" r="3.2" fill="#ff0000"/>
<circle cx="745.8" cy="404.6" r="2.6" fill="#ff0000"/>
<circle cx="754.2" cy="407.9" r="3.6" fill="#ff0000"/>
<circle cx="752.6" cy="402.9" r="3.0" fill="#ff0000"/>
<circle cx="763.5" cy="406.1" r="3.3" fill="#ff0000"/>
<circle cx="754.5" cy="414.6" r="3.7" fill="#ff0000"/>
<circle cx="753.5" cy="407.6" r="2.3" fill="#ff0000"/>
<circle cx="750.7" cy="399.7" r="2.5" fill="#ff0000"/>
<circle cx="761.1" cy="402.7" r="2.3" fill="#ff0000"/>
<circle cx="776.8" cy="418.9" r="2.7" fill="#ff0000"/>
<circle cx="779.8" cy="422.0" r="3.9" fill="#ff0000"/>
<circle cx="779.8" cy="420.3" r="2.5" fill="#ff0000"/>
<circle cx="779.5" cy="422.5" r="3.5" fill="#ff0000"/>
<circle cx="735.0" cy="422.4" r="3.7" fill="#ff0000"/>
<circle cx="739.7" cy="418.2" r="3.8" fill="#ff0000"/>
<circle cx="744.1" cy="422.0" r="2.9" fill="#ff0000"/>
<circle cx="736.3" cy="420.6" r="3.8" fill="#ff0000"/>
<circle cx="745.0" cy="421.7" r="2.7" fill="#ff0000"/>
<circle cx="738.8" cy="423.0" r="2.5" fill="#ff0000"/>
<circle cx="745.1" cy="422.8" r="3.1" fill="#ff0000"/>
<circle cx="738.9" cy="422.9" r="2.4" fill="#ff0000"/>
<circle cx="737.0" cy="422.3" r="2.3" fill="#ff0000"/>
<circle cx="738.2" cy="419.1" r="4.0" fill="#ff0000"/>
<circle cx="743.6" cy="419.8" r="3.8" fill="#ff0000"/>
<circle cx="736.4" cy="418.0" r="2.6" fill="#ff0000"/>
<circle cx="757.8" cy="422.1" r="3.6" fill="#ff0000"/>
<circle cx="748.2" cy="432.9" r="4.1" fill="#ff0000"/>
<circle cx="740.1" cy="426.5" r="2.5" fill="#ff0000"/>
<circle cx="771.1" cy="429.8" r="3.0" fill="#ff0000"/>
<circle cx="742.0" cy="439.7" r="2.4" fill="#ff0000"/>
<circle cx="772.0" cy="425.5" r="3.4" fill="#ff0000"/>
<circle cx="743.6" cy="424.4" r="2.5" fill="#ff0000"/>
<circle cx="763.6" cy="432.6" r="3.0" fill="#ff0000"/>
<circle cx="778.1" cy="435.5" r="3.3" fill="#ff0000"/>
<circle cx="763.8" cy="432.7" r="3.3" fill="#ff0000"/>
<circle cx="753.1" cy="423.6" r="3.2" fill="#ff0000"/>
<circle cx="776.3" cy="424.8" r="3.1" fill="#ff0000"/>
<circle cx="768.4" cy="428.5" r="3.0" fill="#ff0000"/>
<circle cx="753.2" cy="427.6" r="4.2" fill="#ff0000"/>
<circle cx="775.7" cy="425.1" r="3.1" fill="#ff0000"/>
<circle cx="751.4" cy="435.6" r="3.0" fill="#ff0000"/>
<circle cx="759.0" cy="428.3" r="2.6" fill="#ff0000"/>
<circle cx="747.4" cy="436.2" r="3.4" fill="#ff0000"/>
<circle cx="761.3" cy="429.3" r="2.4" fill="#ff0000"/>
<circle cx="761.6" cy="423.5" r="2.8" fill="#ff0000"/>
<circle cx="756.5" cy="433.6" r="3.2" fill="#ff0000"/>
<circle cx="760.5" cy="429.5" r="2.7" fill="#ff0000"/>
<circle cx="775.1" cy="435.6" r="2.3" fill="#ff0000"/>
<circle cx="752.9" cy="436.5" r="4.1" fill="#ff0000"/>
<circle cx="772.4" cy="429.2" r="3.3" fill="#ff0000"/>
<circle cx="764.6" cy="436.9" r="3.7" fill="#ff0000"/>
<circle cx="749.2" cy="434.5" r="3.5" fill="#ff0000"/>
<circle cx="775.6" cy="424.6" r="2.5" fill="#ff0000"/>
<circle cx="758.8" cy="421.9" r="2.3" fill="#ff0000"/>
<circle cx="741.3" cy="423.9" r="3.7" fill="#ff0000"/>
<circle cx="765.3" cy="427.6" r="4.0" fill="#ff0000"/>
<circle cx="756.8" cy="432.4" r="2.4" fill="#ff0000"/>
<circle cx="744.8" cy="435.7" r="2.8" fill="#ff0000"/>
<circle cx="737.7" cy="432.7" r="2.4" fill="#ff0000"/>
<circle cx="738.5" cy="429.1" r="3.0" fill="#ff0000"/>
<circle cx="730.2" cy="432.4" r="4.0" fill="#ff0000"/>
<circle cx="750.8" cy="432.6" r="2.6" fill="#ff0000"/>
<circle cx="755.1" cy="438.1" r="2.7" fill="#ff0000"/>
<circle cx="753.5" cy="433.5" r="3.2" fill="#ff0000"/>
<circle cx="744.1" cy="432.0" r="3.4" fill="#ff0000"/>
<circle cx="784.0" cy="431.5" r="3.0" fill="#ff0000"/>
<circle cx="774.1" cy="433.9" r="2.3" fill="#ff0000"/>
<circle cx="737.2" cy="430.5" r="2.8" fill="#ff0000"/>
<circle cx="772.5" cy="435.6" r="3.1" fill="#ff0000"/>
<circle cx="780.4" cy="428.6" r="2.5" fill="#ff0000"/>
<circle cx="764.8" cy="424.1" r="2.4" fill="#ff0000"/>
<circle cx="752.2" cy="440.2" r="2.3" fill="#ff0000"/>
<circle cx="751.4" cy="424.9" r="2.7" fill="#ff0000"/>
<circle cx="734.9" cy="431.0" r="3.8" fill="#ff0000"/>
<circle cx="775.4" cy="426.9" r="3.6" fill="#ff0000"/>
<circle cx="779.1" cy="433.1" r="3.7" fill="#ff0000"/>
<circle cx="751.6" cy="428.3" r="2.9" fill="#ff0000"/>
<circle cx="737.0" cy="437.6" r="2.8" fill="#ff0000"/>
<circle cx="782.0" cy="433.9" r="3.5" fill="#ff0000"/>
<circle cx="743.3" cy="424.7" r="2.2" fill="#ff0000"/>
<circle cx="734.0" cy="433.7" r="3.1" fill="#ff0000"/>
<circle cx="765.8" cy="427.2" r="4.2" fill="#ff0000"/>
<circle cx="765.2" cy="426.8" r="2.8" fill="#ff0000"/>
<circle cx="759.3" cy="433.9" r="2.3" fill="#ff0000"/>
<circle cx="765.5" cy="436.7" r="3.2" fill="#ff0000"/>
<circle cx="772.7" cy="434.0" r="3.9" fill="#ff0000"/>
<circle cx="755.9" cy="423.3" r="2.6" fill="#ff0000"/>
<circle cx="767.2" cy="429.1" r="3.1" fill="#ff0000"/>
<circle cx="747.9" cy="439.7" r="2.7" fill="#ff0000"/>
<circle cx="781.0" cy="430.1" r="2.3" fill="#ff0000"/>
<circle cx="764.9" cy="437.3" r="3.6" fill="#ff0000"/>
<circle cx="734.7" cy="427.8" r="2.7" fill="#ff0000"/>
<circle cx="762.7" cy="428.1" r="3.8" fill="#ff0000"/>
<circle cx="741.9" cy="427.2" r="3.3" fill="#ff0000"/>
<circle cx="746.2" cy="434.8" r="3.3" fill="#ff0000"/>
<circle cx="754.3" cy="437.9" r="4.0" fill="#ff0000"/>
<circle cx="767.3" cy="431.5" r="2.8" fill="#ff0000"/>
<circle cx="757.2" cy="427.4" r="3.0" fill="#ff0000"/>
<circle cx="779.2" cy="435.9" r="3.8" fill="#ff0000"/>
<circle cx="756.6" cy="439.0" r="2.6" fill="#ff0000"/>
<circle cx="771.1" cy="438.5" r="4.1" fill="#ff0000"/>
<circle cx="755.0" cy="428.5" r="3.1" fill="#ff0000"/>
<circle cx="768.7" cy="422.6" r="4.0" fill="#ff0000"/>
<circle cx="779.0" cy="435.2" r="2.6" fill="#ff0000"/>
<circle cx="761.9" cy="433.6" r="3.0" fill="#ff0000"/>
<circle cx="772.2" cy="459.3" r="3.6" fill="#ff0000"/>
<circle cx="768.6" cy="446.0" r="3.2" fill="#ff0000"/>
<circle cx="766.1" cy="448.1" r="2.9" fill="#ff0000"/>
<circle cx="766.9" cy="448.8" r="3.1" fill="#ff0000"/>
<circle cx="770.4" cy="446.7" r="3.0" fill="#ff0000"/>
<circle cx="781.8" cy="440.9" r="3.5" fill="#ff0000"/>
<circle cx="765.8" cy="456.2" r="2.7" fill="#ff0000"/>
<circle cx="779.0" cy="441.0" r="2.3" fill="#ff0000"/>
<circle cx="772.9" cy="445.0" r="2.9" fill="#ff0000"/>
<circle cx="781.4" cy="446.1" r="2.9" fill="#ff0000"/>
<circle cx="775.7" cy="438.3" r="4.0" fill="#ff0000"/>
<circle cx="768.9" cy="451.5" r="4.1" fill="#ff0000"/>
<circle cx="778.2" cy="449.5" r="4.1" fill="#ff0000"/>
<circle cx="768.3" cy="448.0" r="2.5" fill="#ff0000"/>
<circle cx="774.9" cy="442.7" r="3.6" fill="#ff0000"/>
<circle cx="769.4" cy="455.8" r="2.9" fill="#ff0000"/>
<circle cx="783.8" cy="449.9" r="4.0" fill="#ff0000"/>
<circle cx="781.0" cy="455.6" r="4.0" fill="#ff0000"/>
<circle cx="768.4" cy="443.6" r="3.1" fill="#ff0000"/>
<circle cx="768.9" cy="452.0" r="3.3" fill="#ff0000"/>
<circle cx="769.6" cy="458.6" r="2.8" fill="#ff0000"/>
<circle cx="778.4" cy="440.7" r="3.6" fill="#ff0000"/>
<circle cx="776.3" cy="442.6" r="2.4" fill="#ff0000"/>
<circle cx="770.9" cy="445.3" r="3.3" fill="#ff0000"/>
<circle cx="776.6" cy="455.7" r="3.4" fill="#ff0000"/>
<circle cx="775.8" cy="442.8" r="3.9" fill="#ff0000"/>
<circle cx="772.4" cy="446.1" r="2.3" fill="#ff0000"/>
<circle cx="766.4" cy="452.7" r="3.7" fill="#ff0000"/>
<circle cx="785.0" cy="453.2" r="3.4" fill="#ff0000"/>
<circle cx="768.0" cy="454.7" r="2.3" fill="#ff0000"/>
<circle cx="778.0" cy="439.5" r="2.4" fill="#ff0000"/>
<circle cx="775.0" cy="455.0" r="2.5" fill="#ff0000"/>
<circle cx="782.9" cy="443.8" r="2.7" fill="#ff0000"/>
<circle cx="778.1" cy="450.5" r="2.4" fill="#ff0000"/>
<circle cx="777.4" cy="457.8" r="2.3" fill="#ff0000"/>
<circle cx="771.5" cy="455.3" r="3.7" fill="#ff0000"/>
<circle cx="779.5" cy="445.1" r="4.1" fill="#ff0000"/>
<circle cx="774.5" cy="456.2" r="2.3" fill="#ff0000"/>
<circle cx="785.3" cy="453.8" r="2.5" fill="#ff0000"/>
<circle cx="779.3" cy="444.9" r="3.2" fill="#ff0000"/>
<circle cx="775.3" cy="466.6" r="4.2" fill="#ff0000"/>
<circle cx="771.6" cy="451.0" r="3.9" fill="#ff0000"/>
<circle cx="756.9" cy="462.8" r="2.2" fill="#ff0000"/>
<circle cx="764.1" cy="462.7" r="3.1" fill="#ff0000"/>
<circle cx="772.8" cy="461.7" r="3.8" fill="#ff0000"/>
<circle cx="753.6" cy="462.2" r="3.8" fill="#ff0000"/>
<circle cx="753.6" cy="453.0" r="3.1" fill="#ff0000"/>
<circle cx="764.0" cy="460.5" r="4.1" fill="#ff0000"/>
<circle cx="769.7" cy="469.8" r="3.1" fill="#ff0000"/>
<circle cx="766.1" cy="452.2" r="3.2" fill="#ff0000"/>
<circle cx="763.8" cy="462.3" r="2.7" fill="#ff0000"/>
<circle cx="779.5" cy="461.2" r="2.6" fill="#ff0000"/>
<circle cx="763.4" cy="452.7" r="2.6" fill="#ff0000"/>
<circle cx="773.6" cy="470.0" r="4.2" fill="#ff0000"/>
<circle cx="771.5" cy="457.6" r="2.3" fill="#ff0000"/>
<circle cx="755.2" cy="461.5" r="3.6" fill="#ff0000"/>
<circle cx="759.3" cy="451.6" r="3.8" fill="#ff0000"/>
<circle cx="755.1" cy="464.8" r="2.8" fill="#ff0000"/>
<circle cx="767.6" cy="453.9" r="2.8" fill="#ff0000"/>
<circle cx="761.8" cy="464.8" r="2.6" fill="#ff0000"/>
<circle cx="759.5" cy="456.0" r="2.3" fill="#ff0000"/>
<circle cx="758.8" cy="468.8" r="3.6" fill="#ff0000"/>
<circle cx="776.8" cy="453.4" r="3.2" fill="#ff0000"/>
<circle cx="764.1" cy="462.8" r="3.5" fill="#ff0000"/>
<circle cx="757.0" cy="454.9" r="2.3" fill="#ff0000"/>
<circle cx="770.5" cy="452.6" r="3.1" fill="#ff0000"/>
<circle cx="777.0" cy="451.5" r="3.0" fill="#ff0000"/>
<circle cx="762.1" cy="452.3" r="3.8" fill="#ff0000"/>
<circle cx="764.3" cy="453.9" r="2.3" fill="#ff0000"/>
<circle cx="766.7" cy="456.8" r="4.0" fill="#ff0000"/>
<circle cx="777.8" cy="467.6" r="4.1" fill="#ff0000"/>
<circle cx="761.5" cy="459.0" r="3.6" fill="#ff0000"/>
<circle cx="781.0" cy="462.0" r="3.9" fill="#ff0000"/>
<circle cx="760.1" cy="454.6" r="3.2" fill="#ff0000"/>
<circle cx="775.7" cy="467.3" r="3.6" fill="#ff0000"/>
<circle cx="765.7" cy="458.0" r="4.0" fill="#ff0000"/>
<circle cx="759.4" cy="453.0" r="3.6" fill="#ff0000"/>
<circle cx="759.1" cy="469.1" r="3.4" fill="#ff0000"/>
<circle cx="758.3" cy="463.0" r="3.0" fill="#ff0000"/>
<circle cx="771.6" cy="451.3" r="2.9" fill="#ff0000"/>
<circle cx="776.0" cy="455.3" r="3.3" fill="#ff0000"/>
<circle cx="781.5" cy="465.8" r="4.1" fill="#ff0000"/>
<circle cx="763.8" cy="453.3" r="2.7" fill="#ff0000"/>
<circle cx="772.8" cy="469.1" r="3.7" fill="#ff0000"/>
<circle cx="759.3" cy="463.1" r="3.8" fill="#ff0000"/>
<circle cx="765.9" cy="449.5" r="3.2" fill="#ff0000"/>
<circle cx="775.2" cy="454.2" r="3.8" fill="#ff0000"/>
<circle cx="779.4" cy="461.4" r="3.8" fill="#ff0000"/>
<circle cx="759.7" cy="449.8" r="3.4" fill="#ff0000"/>
<circle cx="759.7" cy="468.7" r="3.9" fill="#ff0000"/>
<circle cx="759.7" cy="451.9" r="2.3" fill="#ff0000"/>
<circle cx="775.1" cy="460.0" r="2.9" fill="#ff0000"/>
<circle cx="774.5" cy="470.1" r="2.3" fill="#ff0000"/>
<circle cx="785.6" cy="478.8" r="2.7" fill="#ff0000"/>
<circle cx="768.0" cy="486.3" r="4.1" fill="#ff0000"/>
<circle cx="769.7" cy="484.9" r="3.0" fill="#ff0000"/>
<circle cx="770.3" cy="487.4" r="2.2" fill="#ff0000"/>
<circle cx="767.9" cy="466.7" r="3.7" fill="#ff0000"/>
<circle cx="761.7" cy="471.3" r="3.8" fill="#ff0000"/>
<circle cx="771.2" cy="473.8" r="4.0" fill="#ff0000"/>
<circle cx="775.4" cy="480.1" r="2.8" fill="#ff0000"/>
<circle cx="765.6" cy="475.8" r="3.1" fill="#ff0000"/>
<circle cx="770.8" cy="481.5" r="3.6" fill="#ff0000"/>
<circle cx="771.5" cy="473.5" r="4.0" fill="#ff0000"/>
<circle cx="776.4" cy="482.0" r="3.7" fill="#ff0000"/>
<circle cx="780.9" cy="466.8" r="3.9" fill="#ff0000"/>
<circle cx="761.0" cy="473.0" r="3.8" fill="#ff0000"/>
<circle cx="780.1" cy="466.1" r="4.1" fill="#ff0000"/>
<circle cx="764.3" cy="477.5" r="3.7" fill="#ff0000"/>
<circle cx="778.8" cy="467.3" r="2.9" fill="#ff0000"/>
<circle cx="777.1" cy="477.6" r="4.0" fill="#ff0000"/>
<circle cx="774.7" cy="474.9" r="2.9" fill="#ff0000"/>
<circle cx="766.1" cy="470.4" r="2.3" fill="#ff0000"/>
<circle cx="779.6" cy="468.6" r="2.8" fill="#ff0000"/>
<circle cx="765.1" cy="477.1" r="3.5" fill="#ff0000"/>
<circle cx="780.5" cy="470.1" r="2.8" fill="#ff0000"/>
<circle cx="766.3" cy="485.1" r="3.7" fill="#ff0000"/>
<circle cx="765.5" cy="485.2" r="3.4" fill="#ff0000"/>
<circle cx="785.3" cy="475.8" r="2.3" fill="#ff0000"/>
<circle cx="771.7" cy="476.4" r="4.1" fill="#ff0000"/>
<circle cx="773.9" cy="481.4" r="3.3" fill="#ff0000"/>
<circle cx="782.5" cy="471.7" r="3.9" fill="#ff0000"/>
<circle cx="767.5" cy="468.5" r="3.1" fill="#ff0000"/>
<circle cx="771.2" cy="475.2" r="2.5" fill="#ff0000"/>
<circle cx="778.6" cy="476.0" r="2.8" fill="#ff0000"/>
<circle cx="761.8" cy="475.0" r="2.4" fill="#ff0000"/>
<circle cx="775.8" cy="467.0" r="2.3" fill="#ff0000"/>
<circle cx="764.6" cy="484.7" r="3.7" fill="#ff0000"/>
<circle cx="778.7" cy="484.0" r="2.4" fill="#ff0000"/>
<circle cx="766.6" cy="479.4" r="4.2" fill="#ff0000"/>
<circle cx="760.2" cy="474.8" r="3.2" fill="#ff0000"/>
<circle cx="773.0" cy="474.8" r="3.9" fill="#ff0000"/>
<circle cx="766.7" cy="471.5" r="3.9" fill="#ff0000"/>
<circle cx="777.3" cy="473.1" r="2.2" fill="#ff0000"/>
<circle cx="765.8" cy="466.9" r="2.4" fill="#ff0000"/>
<circle cx="770.3" cy="474.8" r="2.3" fill="#ff0000"/>
<circle cx="738.4" cy="429.8" r="3.9" fill="#ff0000"/>
<circle cx="744.5" cy="425.1" r="2.6" fill="#ff0000"/>
<circle cx="742.9" cy="430.6" r="2.6" fill="#ff0000"/>
<circle cx="749.0" cy="433.3" r="2.3" fill="#ff0000"/>
<circle cx="750.3" cy="433.8" r="3.4" fill="#ff0000"/>
<circle cx="746.4" cy="432.8" r="3.5" fill="#ff0000"/>
<circle cx="752.6" cy="431.8" r="3.8" fill="#ff0000"/>
<circle cx="748.7" cy="428.6" r="3.8" fill="#ff0000"/>
<circle cx="742.3" cy="429.3" r="3.8" fill="#ff0000"/>
<circle cx="746.4" cy="432.5" r="3.9" fill="#ff0000"/>
<circle cx="752.7" cy="429.2" r="2.4" fill="#ff0000"/>
<circle cx="740.0" cy="431.1" r="2.6" fill="#ff0000"/>
<circle cx="741.3" cy="456.5" r="3.2" fill="#ff0000"/>
<circle cx="740.7" cy="457.3" r="3.9" fill="#ff0000"/>
<circle cx="803.3" cy="420.0" r="3.3" fill="#ff0000"/>
<circle cx="801.6" cy="421.4" r="2.5" fill="#ff0000"/>
<circle cx="916.5" cy="104.8" r="1.2" fill="#ffd000"/>
<circle cx="921.0" cy="113.6" r="1.2" fill="#ffd000"/>
<circle cx="919.0" cy="108.0" r="1.2" fill="#ffd000"/>
<circle cx="904.5" cy="143.2" r="1.2" fill="#ffd000"/>
<circle cx="903.4" cy="151.0" r="1.2" fill="#ffd000"/>
<circle cx="917.0" cy="118.0" r="1.2" fill="#ffd000"/>
</g>
<circle cx="920.5" cy="111.0" r="1.0" fill="#ffd000"/>
<circle cx="922.0" cy="114.5" r="1.0" fill="#ffd000"/>
<circle cx="918.5" cy="106.0" r="1.0" fill="#ffd000"/>
<text x="649.8" y="226" font-family="Liberation Serif, serif" font-size="30.5" textLength="39.4" lengthAdjust="spacingAndGlyphs" fill="#d800d8">3-1</text>
<g stroke="#ffff00" stroke-width="1.1" fill="none" stroke-opacity="0.58">
<path d="M613.5 49.5 H944 V380.5 M613.5 49.5 V490.2 H834 V49.5 M723.5 49.5 V490.2 M613.5 160.5 H944 M613.5 270.5 H944 M613.5 380.5 H944"/>
</g>
<g>
<path d="M1059.5 530 V519" stroke="#00ff00" stroke-width="1"/><path d="M1059.5 516 L1061.3 521.5 L1057.7 521.5 Z" fill="#00ff00"/>
<path d="M1061 530.5 H1070" stroke="#ff0000" stroke-width="1"/><path d="M1074.5 530.5 L1069 532.2 L1069 528.8 Z" fill="#ff0000"/>
<path d="M1059.5 528.7 L1061.3 530.5 L1059.5 532.3 L1057.7 530.5 Z" fill="#1e9cff"/>
<rect x="1079" y="0" width="1" height="547" fill="#6a6a6a"/>
</g>
<!--CLE-->
</svg>

<div id="dlg">
  <div id="title">
    <svg class="abs" style="left:6px;top:5px;width:14px;height:14px" viewBox="0 0 14 14">
      <path d="M10.2 2.9 A5.3 5.3 0 1 0 10.2 10.7 L8.1 8.3 A2.3 2.3 0 1 1 8.1 5.3 Z" fill="#f26a12"/>
      <path d="M10.6 4.1 L13.1 6.8 L10.6 9.5 L8.1 6.8 Z" fill="#1d2a8c"/>
    </svg>
    <div class="t">滤波</div>
    <svg class="abs" style="left:389px;top:6px;width:12px;height:12px" viewBox="0 0 12 12">
      <path d="M1.5 1.5 L10 10 M10 1.5 L1.5 10" stroke="#1a1a1a" stroke-width="1.1" fill="none"/>
    </svg>
  </div>
  <div id="body"></div>
  <div id="scroll">
<!--CB-->
    <div class="gb" style="left:6px;top:13px;width:364px;height:36.6px"></div>
    <div class="gb" style="left:6px;top:61.3px;width:364px;height:58.8px"></div>
    <div class="gb" style="left:6px;top:130.8px;width:364px;height:184px"></div>
    <div class="gb" style="left:6px;top:327px;width:364px;height:60px"></div>

    <div class="lb bgw" style="left:9.6px;top:6.3px;width:69.6px"></div>
    <div class="cb on" style="left:10.8px;top:8px"><svg viewBox="0 0 10.5 10.5"><path d="M2.6 5.4 L4.5 7.2 L8 3.4" stroke="#fff" stroke-width="1" fill="none"/></svg></div>
    <div class="lb" style="left:26.3px;top:6.3px">孤立点滤波</div>
    <div class="cb on" style="left:12.8px;top:30.3px"><svg viewBox="0 0 10.5 10.5"><path d="M2.6 5.4 L4.5 7.2 L8 3.4" stroke="#fff" stroke-width="1" fill="none"/></svg></div>
    <div class="lb" style="left:28.7px;top:28.6px">自动计算参数</div>

    <div class="lb bgw" style="left:9.6px;top:54.3px;width:60px"></div>
    <div class="cb off" style="left:10.8px;top:56px"></div>
    <div class="lb" style="left:26.3px;top:54.3px">低点滤波</div>
    <div class="lb dis" style="left:12.4px;top:77.5px">距离阈值 (m)</div>
    <div class="sp d" style="left:83px;top:75.3px;width:280.2px"><span class="v dis">1.000</span><svg class="ar" viewBox="0 0 11 15"><rect x="0.5" y="0.5" width="10" height="14" fill="#f0f0f0" stroke="#dadada"/><path d="M0.5 7.5 H10.5" stroke="#dadada"/><path d="M2.9 5 L5.5 2.2 L8.1 5 Z M2.9 9.6 L5.5 12.5 L8.1 9.6 Z" fill="#787878"/></svg></div>
    <div class="lb dis" style="left:12.4px;top:98.3px">邻域点数(个)</div>
    <div class="sp d" style="left:83px;top:96px;width:280.2px"><span class="v dis">7</span><svg class="ar" viewBox="0 0 11 15"><rect x="0.5" y="0.5" width="10" height="14" fill="#f0f0f0" stroke="#dadada"/><path d="M0.5 7.5 H10.5" stroke="#dadada"/><path d="M2.9 5 L5.5 2.2 L8.1 5 Z M2.9 9.6 L5.5 12.5 L8.1 9.6 Z" fill="#787878"/></svg></div>

    <div class="lb bgw" style="left:9.6px;top:124.3px;width:69.6px"></div>
    <div class="cb on" style="left:10.8px;top:126px"><svg viewBox="0 0 10.5 10.5"><path d="M2.6 5.4 L4.5 7.2 L8 3.4" stroke="#fff" stroke-width="1" fill="none"/></svg></div>
    <div class="lb" style="left:26.3px;top:124.3px">地面点滤波</div>

    <div class="rd off" style="left:12.6px;top:147.9px"></div><div class="lb" style="left:29.1px;top:146.4px">城市 (路面)</div>
    <div class="rd on" style="left:101.4px;top:147.9px"></div><div class="lb" style="left:117.5px;top:146.4px">平地</div>
    <div class="rd off" style="left:189.8px;top:147.9px"></div><div class="lb" style="left:205.9px;top:146.4px">丘陵</div>
    <div class="rd off" style="left:278.2px;top:147.9px"></div><div class="lb" style="left:294.7px;top:146.4px">山区</div>

    <div class="lb" style="left:12.4px;top:167.2px">最大建筑物尺寸 (m)</div>
    <div class="sp" style="left:189.6px;top:165.3px;width:173.6px"><span class="v">80.00</span><svg class="ar" viewBox="0 0 11 15"><rect x="0.5" y="0.5" width="10" height="14" fill="#f0f0f0" stroke="#cfcfcf"/><path d="M0.5 7.5 H10.5" stroke="#cfcfcf"/><path d="M2.9 5 L5.5 2.2 L8.1 5 Z M2.9 9.6 L5.5 12.5 L8.1 9.6 Z" fill="#000"/></svg></div>
    <div class="lb" style="left:12.4px;top:188.3px">最大地形夹角 (°)</div>
    <div class="sp" style="left:189.6px;top:186.4px;width:173.6px"><span class="v">15.00</span><svg class="ar" viewBox="0 0 11 15"><rect x="0.5" y="0.5" width="10" height="14" fill="#f0f0f0" stroke="#cfcfcf"/><path d="M0.5 7.5 H10.5" stroke="#cfcfcf"/><path d="M2.9 5 L5.5 2.2 L8.1 5 Z M2.9 9.6 L5.5 12.5 L8.1 9.6 Z" fill="#000"/></svg></div>
    <div class="lb" style="left:12.4px;top:209.3px">迭代角度 (°)</div>
    <div class="sp" style="left:189.6px;top:207.4px;width:173.6px"><span class="v">12.00</span><svg class="ar" viewBox="0 0 11 15"><rect x="0.5" y="0.5" width="10" height="14" fill="#f0f0f0" stroke="#cfcfcf"/><path d="M0.5 7.5 H10.5" stroke="#cfcfcf"/><path d="M2.9 5 L5.5 2.2 L8.1 5 Z M2.9 9.6 L5.5 12.5 L8.1 9.6 Z" fill="#000"/></svg></div>
    <div class="lb" style="left:12.4px;top:230.4px">迭代距离 (m)</div>
    <div class="sp" style="left:189.6px;top:228.1px;width:173.6px"><span class="v">1.00</span><svg class="ar" viewBox="0 0 11 15"><rect x="0.5" y="0.5" width="10" height="14" fill="#f0f0f0" stroke="#cfcfcf"/><path d="M0.5 7.5 H10.5" stroke="#cfcfcf"/><path d="M2.9 5 L5.5 2.2 L8.1 5 Z M2.9 9.6 L5.5 12.5 L8.1 9.6 Z" fill="#000"/></svg></div>
    <div class="lb" style="left:12.4px;top:251.5px">地面点密度</div>
    <div class="sp cmb" style="left:189.6px;top:248.6px;width:173.8px;height:18.2px"><span class="v" style="top:2.3px">中密度</span><svg class="ar" viewBox="0 0 11 15" style="right:1.5px"><path d="M3.3 6.2 L7.7 6.2 L5.5 8.9 Z" fill="#111"/></svg></div>

    <div class="cb off" style="left:13.2px;top:272.8px"></div>
    <div class="lb" style="left:28.7px;top:272.3px">减小迭代角度当边长小于 (m)</div>
    <div class="sp d" style="left:189.6px;top:269.8px;width:173.8px"><span class="v dis">2.000</span><svg class="ar" viewBox="0 0 11 15"><rect x="0.5" y="0.5" width="10" height="14" fill="#f1f1f1" stroke="#e6e6e6"/><path d="M0.5 7.5 H10.5" stroke="#e6e6e6"/><path d="M2.9 5 L5.5 2.2 L8.1 5 Z M2.9 9.6 L5.5 12.5 L8.1 9.6 Z" fill="#868686"/></svg></div>
    <div class="cb off" style="left:13.2px;top:294.2px"></div>
    <div class="lb" style="left:28.7px;top:293.1px">停止构建三角形当边长小于 (m)</div>
    <div class="sp d" style="left:189.6px;top:290.8px;width:173.8px"><span class="v dis">2.000</span><svg class="ar" viewBox="0 0 11 15"><rect x="0.5" y="0.5" width="10" height="14" fill="#f1f1f1" stroke="#e6e6e6"/><path d="M0.5 7.5 H10.5" stroke="#e6e6e6"/><path d="M2.9 5 L5.5 2.2 L8.1 5 Z M2.9 9.6 L5.5 12.5 L8.1 9.6 Z" fill="#868686"/></svg></div>

    <div class="lb bgw" style="left:9.6px;top:318.5px;width:69.6px"></div>
    <div class="cb off" style="left:10.8px;top:320px"></div>
    <div class="lb" style="left:26.3px;top:318.5px">建筑物滤波</div>
<!--CE-->
    <div id="track"><div id="thumb" style="left:3.4px;width:6px"></div></div>
  </div>
  <div class="btn" style="left:268.6px">上一步</div>
  <div class="btn def" style="left:336.6px">开始</div>
</div>
</body>
</html>
